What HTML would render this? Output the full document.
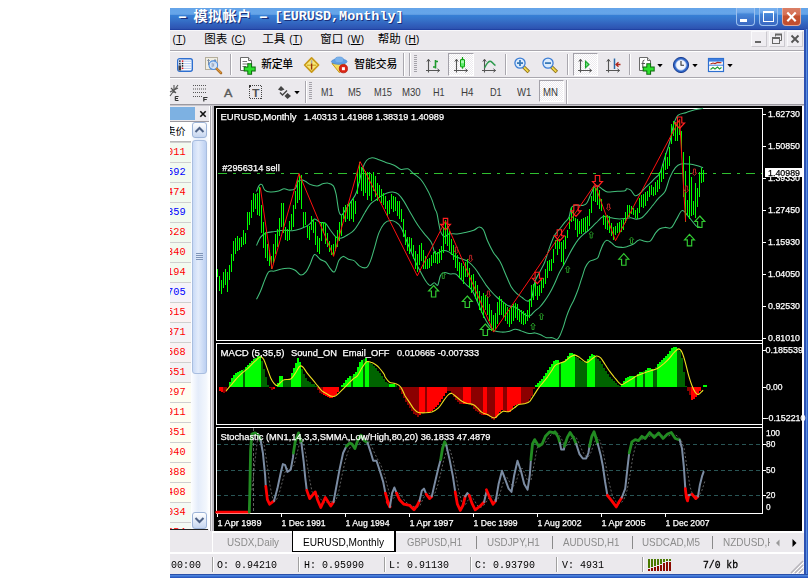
<!DOCTYPE html>
<html lang="zh"><head><meta charset="utf-8"><title>EURUSD,Monthly</title>
<style>
html,body{margin:0;padding:0;background:#fff;}
body{width:808px;height:578px;position:relative;overflow:hidden;font-family:"Liberation Sans","Noto Sans CJK SC",sans-serif;font-size:11px;color:#000;}
.a{position:absolute;white-space:nowrap;}
.win{left:170px;top:8px;width:638px;height:570px;background:#EBE9ED;}
.title{left:170px;top:8px;width:638px;height:22px;background:linear-gradient(to bottom,#64A3E8 0%,#66A6EA 24%,#5B99E0 31%,#367FD5 34%,#3672C9 55%,#3161BD 75%,#2E55B2 92%,#2A4EAE 95%,#18389A 100%);}
.ttext{color:#fff;font-weight:bold;font-family:"Liberation Mono","Noto Sans CJK SC",monospace;font-size:13px;line-height:22px;top:8px;text-shadow:1px 1px 0 #1a2f7a;}
.menu{font-family:"Liberation Sans","Noto Sans CJK SC",sans-serif;font-size:11.5px;line-height:20px;top:29px;color:#000;}
.mp{font-size:10px;margin-left:4px;letter-spacing:0.3px;}
.hl{height:1px;left:170px;width:634px;}
.tf{font-size:9.5px;color:#333;line-height:12px;top:87px;}
.mono{font-family:"Liberation Mono","Noto Sans CJK SC",monospace;}
.row{left:170px;width:21px;height:19px;overflow:hidden;font-family:"Liberation Mono",monospace;font-size:10.3px;line-height:18px;letter-spacing:0;}
.tab{top:534px;height:18px;line-height:18px;font-size:11px;color:#8A8A8A;}
.st{top:556px;height:18px;line-height:18px;font-size:10.5px;font-family:"Liberation Mono","Noto Sans CJK SC",monospace;color:#000;letter-spacing:0.55px;}
.vs{top:557px;height:15px;width:1px;background:#A0A0A0;border-right:1px solid #fff;}
</style></head><body>

<div class="a win"></div>
<div class="a title"></div>
<div class="a ttext" style="left:175.2px;top:6.5px;transform-origin:0 0;transform:scaleX(1.9)">-</div>
<div class="a ttext" style="left:193.5px;top:6px;font-size:14px;letter-spacing:0.5px">模拟帐户</div>
<div class="a ttext" style="left:255.8px;top:6.5px;transform-origin:0 0;transform:scaleX(1.9)">-</div>
<div class="a ttext" style="left:274.6px;top:6px;font-size:13.45px">[EURUSD,Monthly]</div>
<div class="a" style="left:736px;top:8px;width:19px;height:18px;box-sizing:border-box;border:1px solid #9CC0EE;border-top:none;border-radius:0 0 4px 4px;background:linear-gradient(to bottom,#78B0EE 0%,#6FA8EA 24%,#5F9BE2 31%,#4588DA 34%,#4179CE 60%,#3A68C2 100%)"></div><div class="a" style="left:740px;top:19px;width:7px;height:3px;background:#fff"></div>
<div class="a" style="left:759px;top:8px;width:19px;height:18px;box-sizing:border-box;border:1px solid #9CC0EE;border-top:none;border-radius:0 0 4px 4px;background:linear-gradient(to bottom,#78B0EE 0%,#6FA8EA 24%,#5F9BE2 31%,#4588DA 34%,#4179CE 60%,#3A68C2 100%)"></div><div class="a" style="left:763px;top:11px;width:11px;height:11px;border:1px solid #fff;border-top:2px solid #fff;box-sizing:border-box"></div>
<div class="a" style="left:782px;top:8px;width:19px;height:18px;box-sizing:border-box;border:1px solid #E2A898;border-top:none;border-radius:0 0 4px 4px;background:linear-gradient(to bottom,#DA7F66 0%,#D46E54 42%,#C4512F 46%,#C24E30 100%)"></div><svg class="a" style="left:782px;top:8px" width="19" height="18" viewBox="0 0 19 18"><path d="M5.3 4.5 L13.7 13.2 M13.7 4.5 L5.3 13.2" stroke="#fff" stroke-width="2.1" stroke-linecap="butt"/></svg>
<div class="a" style="left:804px;top:29px;width:4px;height:549px;background:linear-gradient(to right,#2C50B0 0,#2C50B0 50%,#5A90E0 50%,#5A90E0 75%,#3060C8 75%)"></div>
<div class="a" style="left:170px;top:574px;width:638px;height:4px;background:linear-gradient(to bottom,#2B50A8 0,#2B50A8 25%,#4C82DC 25%,#4C82DC 50%,#3A70D0 50%,#3A70D0 75%,#2A58C0 75%)"></div>
<div class="a menu" style="left:168.5px"><span class="mp">(<u>T</u>)</span></div>
<div class="a menu" style="left:204.2px">图表<span class="mp">(<u>C</u>)</span></div>
<div class="a menu" style="left:262.3px">工具<span class="mp">(<u>T</u>)</span></div>
<div class="a menu" style="left:320.3px">窗口<span class="mp">(<u>W</u>)</span></div>
<div class="a menu" style="left:377.8px">帮助<span class="mp">(<u>H</u>)</span></div>
<div class="a" style="left:170px;top:30px;width:634px;height:1px;background:#F8F7FA"></div>
<div class="a" style="left:751px;top:31px;width:16px;height:16px;box-sizing:border-box;background:#EFEDF1;border:1px solid;border-color:#FAFAFC #CBC9CF #CBC9CF #FAFAFC"></div>
<div class="a" style="left:769px;top:31px;width:16px;height:16px;box-sizing:border-box;background:#EFEDF1;border:1px solid;border-color:#FAFAFC #CBC9CF #CBC9CF #FAFAFC"></div>
<div class="a" style="left:787px;top:31px;width:16px;height:16px;box-sizing:border-box;background:#EFEDF1;border:1px solid;border-color:#FAFAFC #CBC9CF #CBC9CF #FAFAFC"></div>
<div class="a" style="left:755px;top:41px;width:6px;height:2px;background:#666"></div>
<svg class="a" style="left:771px;top:33px" width="12" height="12" viewBox="0 0 12 12"><path d="M4.5 3.5 V1.5 H10.5 V7.5 H8.5" fill="none" stroke="#666" stroke-width="1"/><path d="M4 1.5 H11" stroke="#666" stroke-width="2"/><rect x="1.5" y="4.5" width="7" height="6" fill="none" stroke="#666"/><path d="M1 5 H9" stroke="#666" stroke-width="2"/></svg>
<svg class="a" style="left:790px;top:34px" width="10" height="10" viewBox="0 0 10 10"><path d="M1.5 1.5 L8.5 8.5 M8.5 1.5 L1.5 8.5" stroke="#555" stroke-width="1.9"/></svg>
<div class="a hl" style="top:50px;background:#A9A7AE"></div>
<div class="a hl" style="top:51px;background:#fff"></div>
<div class="a hl" style="top:77px;background:#A9A7AE"></div>
<div class="a hl" style="top:78px;background:#fff"></div>
<div class="a hl" style="top:104px;background:#9B99A0"></div>
<div class="a hl" style="top:105px;background:#C8C6CC"></div>
<svg class="a" style="left:177px;top:58px;overflow:visible" width="16" height="14" viewBox="0 0 16 14"><rect x="0.7" y="0.7" width="14.6" height="12.6" rx="2" fill="#fff" stroke="#2E6FD0" stroke-width="1.4"/><rect x="1.5" y="1.5" width="2.6" height="11" fill="#C9D6EC"/><rect x="1.5" y="7.5" width="2.6" height="5" fill="#3A3A40"/><path d="M5 3.2 H14.5 M5 5.6 H14.5 M5 8 H14.5 M5 10.4 H14.5" stroke="#8FB2EA" stroke-width="0.7"/><rect x="2.2" y="2.4" width="1.3" height="1.4" fill="#111"/><rect x="2.2" y="5" width="1.3" height="1.4" fill="#111"/><rect x="4.8" y="2.4" width="1.5" height="1.5" fill="#E81818"/><rect x="4.8" y="4.8" width="1.4" height="1.4" fill="#111"/><rect x="4.8" y="7.2" width="1.4" height="1.4" fill="#111"/><rect x="4.8" y="9.6" width="1.5" height="1.5" fill="#E81818"/></svg>
<svg class="a" style="left:205px;top:57px;overflow:visible" width="18" height="18" viewBox="0 0 18 18"><rect x="0.5" y="0.5" width="12" height="12" fill="#F1EEE2" stroke="#B4AE9C"/><path d="M3.5 2 V8 M2.3 3.5 H4.8 M10 2 V7 M8.6 3.5 H11.2" stroke="#7C8CA4" stroke-width="1"/><circle cx="8.3" cy="8.2" r="4.3" fill="#D2E3F8" fill-opacity="0.85" stroke="#4E8FE0" stroke-width="1.1"/><path d="M7.2 5.8 V10.2 M8.6 6.5 V9.5" stroke="#9AA8C0" stroke-width="1.1"/><path d="M11.8 11.8 L16 16" stroke="#A86A20" stroke-width="2.6" stroke-linecap="round"/><path d="M11.8 11.6 L15.8 15.6" stroke="#E09A40" stroke-width="1.2" stroke-linecap="round"/></svg>
<div class="a" style="left:230px;top:54px;width:1px;height:21px;background:#A9A7AE"></div><div class="a" style="left:231px;top:54px;width:1px;height:21px;background:#fff"></div>
<svg class="a" style="left:240px;top:57px;overflow:visible" width="17" height="18" viewBox="0 0 17 18"><path d="M0.5 0.5 H8.5 L11.5 3.5 V13.5 H0.5 Z" fill="#fff" stroke="#6A6A6A"/><path d="M8.5 0.5 V3.5 H11.5" fill="#ddd" stroke="#6A6A6A"/><path d="M2.5 4.5 H7 M2.5 7 H9 M2.5 9.5 H6" stroke="#777"/><path d="M9.7 6.3 V17.7 M3.7 12 H15.7" stroke="#0A6A0A" stroke-width="4.8"/><path d="M9.7 7.3 V16.7 M4.7 12 H14.7" stroke="#2EE02E" stroke-width="2.8"/></svg>
<div class="a" style="left:261.3px;top:56.5px;font-size:10.8px;line-height:14px;font-weight:500;letter-spacing:-0.3px;color:#000">新定单</div>
<svg class="a" style="left:303px;top:56px;overflow:visible" width="17" height="18" viewBox="0 0 17 18"><path d="M8.6 1.8 L15.6 9 L8.6 16.2 L1.6 9 Z" fill="#F9E877" stroke="#C9991A" stroke-width="1.7" stroke-linejoin="round"/><path d="M4 9.2 H13.2" stroke="#C9A020" stroke-width="1.1"/><path d="M8.6 4.2 V7.5" stroke="#A8A8A8" stroke-width="1.5"/><path d="M8.6 7.5 V13.6" stroke="#9C3010" stroke-width="1.4"/></svg>
<svg class="a" style="left:330px;top:56px;overflow:visible" width="19" height="18" viewBox="0 0 19 18"><path d="M2 7.5 L9.5 16.8 L15 8 Z" fill="#F6DC5C" stroke="#C59A1E" stroke-width="1"/><ellipse cx="9.2" cy="5.6" rx="7.8" ry="2.7" fill="#5E9FE4" stroke="#4C8AD4" stroke-width="0.8"/><ellipse cx="9.2" cy="3.9" rx="4.4" ry="2.9" fill="#79B2EC" stroke="#5A96DC" stroke-width="0.7"/><circle cx="13.4" cy="12.7" r="4.1" fill="#DC2414" stroke="#B01C10" stroke-width="0.8"/><rect x="11.9" y="11.2" width="3" height="3" fill="#fff"/></svg>
<div class="a" style="left:354.2px;top:56.5px;font-size:10.8px;line-height:14px;font-weight:500;letter-spacing:0px;color:#000">智能交易</div>
<div class="a" style="left:403px;top:53px;width:1px;height:23px;background:#A9A7AE"></div><div class="a" style="left:404px;top:53px;width:1px;height:23px;background:#fff"></div>
<div class="a" style="left:409px;top:53px;width:1px;height:23px;background:#A9A7AE"></div><div class="a" style="left:410px;top:53px;width:1px;height:23px;background:#fff"></div>
<svg class="a" style="left:414px;top:55px;overflow:visible" width="4" height="19" viewBox="0 0 4 19"><rect x="0" y="0" width="3" height="1" fill="#A5A3AA"/><rect x="0" y="2" width="3" height="1" fill="#A5A3AA"/><rect x="0" y="4" width="3" height="1" fill="#A5A3AA"/><rect x="0" y="6" width="3" height="1" fill="#A5A3AA"/><rect x="0" y="8" width="3" height="1" fill="#A5A3AA"/><rect x="0" y="10" width="3" height="1" fill="#A5A3AA"/><rect x="0" y="12" width="3" height="1" fill="#A5A3AA"/><rect x="0" y="14" width="3" height="1" fill="#A5A3AA"/><rect x="0" y="16" width="3" height="1" fill="#A5A3AA"/></svg>
<svg class="a" style="left:425px;top:58px;overflow:visible" width="16" height="16" viewBox="0 0 16 16"><path d="M3.5 1.5 V14.5 M1 12.5 H14.5" stroke="#555" stroke-width="1.1" fill="none"/><path d="M1.8 3.6 L3.5 1.2 L5.2 3.6 M12.4 10.8 L14.6 12.5 L12.4 14.2" stroke="#555" stroke-width="1" fill="none"/><path d="M10.5 2 V10.5 M10.5 3.5 H13 M8 9 H10.5" stroke="#1E9A2E" stroke-width="1.6" fill="none"/></svg>
<div class="a" style="left:448px;top:53px;width:26px;height:23px;box-sizing:border-box;border:1px solid;border-color:#A3A1A9 #fff #fff #A3A1A9;background:repeating-conic-gradient(#fff 0 25%,#ECEAEE 0 50%) 0 0/2px 2px;"></div>
<svg class="a" style="left:453px;top:58px;overflow:visible" width="16" height="16" viewBox="0 0 16 16"><path d="M3.5 1.5 V14.5 M1 12.5 H14.5" stroke="#555" stroke-width="1.1" fill="none"/><path d="M1.8 3.6 L3.5 1.2 L5.2 3.6 M12.4 10.8 L14.6 12.5 L12.4 14.2" stroke="#555" stroke-width="1" fill="none"/><path d="M9.5 -1 V10.7" stroke="#12A012" stroke-width="1.2"/><rect x="7.5" y="1.5" width="4" height="7.4" rx="0.5" fill="#5AEE6A" stroke="#12A012"/><rect x="8" y="2.6" width="3" height="2.6" fill="#A8F8B0"/></svg>
<svg class="a" style="left:481px;top:58px;overflow:visible" width="16" height="16" viewBox="0 0 16 16"><path d="M3.5 1.5 V14.5 M1 12.5 H14.5" stroke="#555" stroke-width="1.1" fill="none"/><path d="M1.8 3.6 L3.5 1.2 L5.2 3.6 M12.4 10.8 L14.6 12.5 L12.4 14.2" stroke="#555" stroke-width="1" fill="none"/><path d="M3.5 10 C6 5 8 2.5 10 3.5 S13 7 14.5 7.5" stroke="#2E9A4E" stroke-width="1.5" fill="none"/></svg>
<div class="a" style="left:505px;top:54px;width:1px;height:21px;background:#A9A7AE"></div><div class="a" style="left:506px;top:54px;width:1px;height:21px;background:#fff"></div>
<svg class="a" style="left:514px;top:56px;overflow:visible" width="17" height="18" viewBox="0 0 17 18"><path d="M9.6 10.9 L14.8 16.1" stroke="#8A6A14" stroke-width="3.6" stroke-linecap="butt"/><path d="M9.8 11.1 L14.3 15.6" stroke="#F0D84A" stroke-width="2" stroke-linecap="butt"/><circle cx="6" cy="7.1" r="5.1" fill="#DCEBFB" stroke="#3A7CD4" stroke-width="1.25"/><path d="M3 7.1 H9" stroke="#3A7AB8" stroke-width="1.8"/><path d="M6 4.1 V10.1" stroke="#3A7AB8" stroke-width="1.8"/></svg>
<svg class="a" style="left:542px;top:56px;overflow:visible" width="17" height="18" viewBox="0 0 17 18"><path d="M9.6 10.9 L14.8 16.1" stroke="#8A6A14" stroke-width="3.6" stroke-linecap="butt"/><path d="M9.8 11.1 L14.3 15.6" stroke="#F0D84A" stroke-width="2" stroke-linecap="butt"/><circle cx="6" cy="7.1" r="5.1" fill="#DCEBFB" stroke="#3A7CD4" stroke-width="1.25"/><path d="M3 7.1 H9" stroke="#3A7AB8" stroke-width="1.8"/></svg>
<div class="a" style="left:567px;top:54px;width:1px;height:21px;background:#A9A7AE"></div><div class="a" style="left:568px;top:54px;width:1px;height:21px;background:#fff"></div>
<div class="a" style="left:573px;top:53px;width:25px;height:23px;box-sizing:border-box;border:1px solid;border-color:#A3A1A9 #fff #fff #A3A1A9;background:repeating-conic-gradient(#fff 0 25%,#ECEAEE 0 50%) 0 0/2px 2px;"></div>
<svg class="a" style="left:577px;top:58px;overflow:visible" width="16" height="16" viewBox="0 0 16 16"><path d="M3.5 1.5 V14.5 M1 12.5 H14.5" stroke="#555" stroke-width="1.1" fill="none"/><path d="M1.8 3.6 L3.5 1.2 L5.2 3.6 M12.4 10.8 L14.6 12.5 L12.4 14.2" stroke="#555" stroke-width="1" fill="none"/><path d="M8.5 3.2 L12 6.5 L8.5 9.8 Z" fill="#6CEC7C" stroke="#18A028" stroke-width="1.1"/></svg>
<svg class="a" style="left:605px;top:58px;overflow:visible" width="17" height="16" viewBox="0 0 17 16"><path d="M3.5 1.5 V14.5 M1 12.5 H14.5" stroke="#555" stroke-width="1.1" fill="none"/><path d="M1.8 3.6 L3.5 1.2 L5.2 3.6 M12.4 10.8 L14.6 12.5 L12.4 14.2" stroke="#555" stroke-width="1" fill="none"/><path d="M9.5 0.5 V11" stroke="#2A6AA8" stroke-width="1.5"/><path d="M15.5 6.5 H11.5 M13.5 4.2 L11 6.5 L13.5 8.8" stroke="#B0281C" stroke-width="1.3" fill="none"/></svg>
<div class="a" style="left:629px;top:54px;width:1px;height:21px;background:#A9A7AE"></div><div class="a" style="left:630px;top:54px;width:1px;height:21px;background:#fff"></div>
<svg class="a" style="left:639px;top:57px;overflow:visible" width="17" height="18" viewBox="0 0 17 18"><path d="M0.5 0.5 H8.5 L11.5 3.5 V13.5 H0.5 Z" fill="#fff" stroke="#6A6A6A"/><path d="M8.5 0.5 V3.5 H11.5" fill="#ddd" stroke="#6A6A6A"/><path d="M5.5 3 Q3.5 3 3.8 6 V11 M2.5 6.5 H6" stroke="#555" fill="none"/><path d="M9.7 6.3 V17.7 M3.7 12 H15.7" stroke="#0A6A0A" stroke-width="4.8"/><path d="M9.7 7.3 V16.7 M4.7 12 H14.7" stroke="#2EE02E" stroke-width="2.8"/></svg>
<svg class="a" style="left:657px;top:64px;overflow:visible" width="6" height="4" viewBox="0 0 6 4"><path d="M0.3 0 H5.7 L3 3.2 Z" fill="#000"/></svg>
<svg class="a" style="left:672px;top:56px;overflow:visible" width="18" height="18" viewBox="0 0 18 18"><circle cx="9" cy="9" r="7.6" fill="#2E66C8" stroke="#1C3E90" stroke-width="1"/><circle cx="9" cy="9" r="5.3" fill="#F2F6FC" stroke="#9DB8E8" stroke-width="0.8"/><path d="M9 5 V9.3 H12" stroke="#333" stroke-width="1.1" fill="none"/></svg>
<svg class="a" style="left:692px;top:64px;overflow:visible" width="6" height="4" viewBox="0 0 6 4"><path d="M0.3 0 H5.7 L3 3.2 Z" fill="#000"/></svg>
<svg class="a" style="left:708px;top:58px;overflow:visible" width="16" height="14" viewBox="0 0 16 14"><rect x="0.5" y="0.5" width="15" height="13" fill="#fff" stroke="#2E6FD0" stroke-width="1.2"/><rect x="1" y="1" width="14" height="2.6" fill="#3F7FE0"/><path d="M1 7.2 H15" stroke="#3F7FE0" stroke-width="1"/><path d="M2.5 6 L5 5 L7 5.6 L9.5 4.4 L13.5 4.8" stroke="#B0281C" stroke-width="1.1" fill="none"/><path d="M2.5 11.5 L5 9.5 L7 11 L9.5 9 L11.5 11 L13.5 9.5" stroke="#1E9A2E" stroke-width="1.1" fill="none"/></svg>
<svg class="a" style="left:727px;top:64px;overflow:visible" width="6" height="4" viewBox="0 0 6 4"><path d="M0.3 0 H5.7 L3 3.2 Z" fill="#000"/></svg>
<svg class="a" style="left:170px;top:84px;overflow:visible" width="11" height="18" viewBox="0 0 11 18"><path d="M0 12 L8 1 M0 8 L8 4 M1 4 L6 9 M4 1 V9" stroke="#555" stroke-width="1.1" fill="none"/><path d="M5.3 12.5 V16.5 M5.3 12.5 H8.5 M5.3 14.5 H8 M5.3 16.5 H8.5" stroke="#333" stroke-width="1.1" fill="none"/></svg>
<svg class="a" style="left:193px;top:84px;overflow:visible" width="16" height="18" viewBox="0 0 16 18"><path d="M0 1.5 H13 M0 5 H13 M0 8.5 H13 M0 12.5 H9" stroke="#555" stroke-width="1" stroke-dasharray="1 1"/><path d="M10.8 13 V17.5 M10.8 13.5 H14.5 M10.8 15.5 H13.8" stroke="#333" stroke-width="1.2" fill="none"/></svg>
<div class="a" style="left:223.6px;top:85.5px;font-family:'Liberation Sans',sans-serif;font-size:11.3px;line-height:14px;color:#5A5A5A;transform-origin:0 0;transform:scaleX(1.114);-webkit-text-stroke:0.35px #5A5A5A;">A</div>
<svg class="a" style="left:249px;top:85px;overflow:visible" width="14" height="15" viewBox="0 0 14 15"><rect x="0.5" y="0.5" width="12" height="13" fill="none" stroke="#444" stroke-dasharray="1 1" shape-rendering="crispEdges"/><rect x="0" y="0" width="2" height="2" fill="#333"/></svg>
<div class="a" style="left:252.0px;top:86.5px;font-family:'Liberation Sans',sans-serif;font-size:11.0px;line-height:12px;color:#555;font-weight:bold;transform-origin:0 0;transform:scaleX(1.116);">T</div>
<svg class="a" style="left:277px;top:86px;overflow:visible" width="15" height="13" viewBox="0 0 15 13"><path d="M4 0 L7.5 3.5 L4 5 L1 3.5 Z" fill="#444"/><path d="M3 6.5 L5.5 9 L10 4.5" stroke="#444" stroke-width="1.4" fill="none"/><path d="M10.5 7 L14 10 L10.5 13 L7.5 10 Z" fill="#444"/></svg>
<svg class="a" style="left:294px;top:91px;overflow:visible" width="6" height="4" viewBox="0 0 6 4"><path d="M0.3 0 H5.7 L3 3.2 Z" fill="#000"/></svg>
<div class="a" style="left:305px;top:81px;width:1px;height:22px;background:#A9A7AE"></div><div class="a" style="left:306px;top:81px;width:1px;height:22px;background:#fff"></div>
<svg class="a" style="left:309px;top:82px;overflow:visible" width="4" height="19" viewBox="0 0 4 19"><rect x="0" y="0" width="3" height="1" fill="#A5A3AA"/><rect x="0" y="2" width="3" height="1" fill="#A5A3AA"/><rect x="0" y="4" width="3" height="1" fill="#A5A3AA"/><rect x="0" y="6" width="3" height="1" fill="#A5A3AA"/><rect x="0" y="8" width="3" height="1" fill="#A5A3AA"/><rect x="0" y="10" width="3" height="1" fill="#A5A3AA"/><rect x="0" y="12" width="3" height="1" fill="#A5A3AA"/><rect x="0" y="14" width="3" height="1" fill="#A5A3AA"/><rect x="0" y="16" width="3" height="1" fill="#A5A3AA"/></svg>
<div class="a" style="left:320.5px;top:86.5px;font-family:'Liberation Sans',sans-serif;font-size:10.3px;line-height:12px;color:#3C3C3C;transform-origin:0 0;transform:scaleX(0.874);">M1</div>
<div class="a" style="left:348.0px;top:86.5px;font-family:'Liberation Sans',sans-serif;font-size:10.3px;line-height:12px;color:#3C3C3C;transform-origin:0 0;transform:scaleX(0.909);">M5</div>
<div class="a" style="left:374.3px;top:86.5px;font-family:'Liberation Sans',sans-serif;font-size:10.3px;line-height:12px;color:#3C3C3C;transform-origin:0 0;transform:scaleX(0.898);">M15</div>
<div class="a" style="left:402.0px;top:86.5px;font-family:'Liberation Sans',sans-serif;font-size:10.3px;line-height:12px;color:#3C3C3C;transform-origin:0 0;transform:scaleX(0.933);">M30</div>
<div class="a" style="left:433.4px;top:86.5px;font-family:'Liberation Sans',sans-serif;font-size:10.3px;line-height:12px;color:#3C3C3C;transform-origin:0 0;transform:scaleX(0.881);">H1</div>
<div class="a" style="left:460.5px;top:86.5px;font-family:'Liberation Sans',sans-serif;font-size:10.3px;line-height:12px;color:#3C3C3C;transform-origin:0 0;transform:scaleX(0.949);">H4</div>
<div class="a" style="left:489.6px;top:86.5px;font-family:'Liberation Sans',sans-serif;font-size:10.3px;line-height:12px;color:#3C3C3C;transform-origin:0 0;transform:scaleX(0.889);">D1</div>
<div class="a" style="left:517.0px;top:86.5px;font-family:'Liberation Sans',sans-serif;font-size:10.3px;line-height:12px;color:#3C3C3C;transform-origin:0 0;transform:scaleX(0.932);">W1</div>
<div class="a" style="left:539px;top:80px;width:25px;height:22px;box-sizing:border-box;border:1px solid;border-color:#A3A1A9 #fff #fff #A3A1A9;background:repeating-conic-gradient(#fff 0 25%,#ECEAEE 0 50%) 0 0/2px 2px;"></div>
<div class="a" style="left:543.4px;top:86.5px;font-family:'Liberation Sans',sans-serif;font-size:10.3px;line-height:12px;color:#3C3C3C;transform-origin:0 0;transform:scaleX(0.936);">MN</div>
<div class="a" style="left:566px;top:80px;width:1px;height:24px;background:#A9A7AE"></div><div class="a" style="left:567px;top:80px;width:1px;height:24px;background:#fff"></div>
<div class="a" style="left:170px;top:107px;width:25px;height:13px;background:#7DB1E2"></div>
<svg class="a" style="left:198px;top:109px" width="10" height="10" viewBox="0 0 10 10"><path d="M2.3 2.3 L7.7 7.7 M7.7 2.3 L2.3 7.7" stroke="#111" stroke-width="1.6"/></svg>
<div class="a" style="left:170px;top:121px;width:40px;height:1px;background:#9B99A0"></div>
<div class="a" style="left:170px;top:122px;width:21px;height:19px;background:#fff;overflow:hidden;border-bottom:1px solid #B8B8B8"><span class="a" style="left:-4.5px;top:0;font-size:10px;line-height:19px;font-family:'Liberation Sans','Noto Sans CJK SC',sans-serif">卖价</span></div>
<div class="a" style="left:170px;top:142px;width:21px;height:387px;background:#CFCFCF"></div>
<div class="a row" style="top:143px;height:19px;color:#FF0000;background:#F2FAF0"><span style="margin-left:-2.9px">011</span></div>
<div class="a row" style="top:163px;height:19px;color:#0000FF;background:#F2FAF0"><span style="margin-left:-2.9px">592</span></div>
<div class="a row" style="top:183px;height:19px;color:#FF0000;background:#F2FAF0"><span style="margin-left:-2.9px">474</span></div>
<div class="a row" style="top:203px;height:19px;color:#0000FF;background:#F2FAF0"><span style="margin-left:-2.9px">359</span></div>
<div class="a row" style="top:223px;height:19px;color:#FF0000;background:#F2FAF0"><span style="margin-left:-2.9px">528</span></div>
<div class="a row" style="top:243px;height:19px;color:#FF0000;background:#F2FAF0"><span style="margin-left:-2.9px">340</span></div>
<div class="a row" style="top:263px;height:19px;color:#FF0000;background:#F2FAF0"><span style="margin-left:-2.9px">194</span></div>
<div class="a row" style="top:283px;height:19px;color:#0000FF;background:#F4F3FA"><span style="margin-left:-2.9px">705</span></div>
<div class="a row" style="top:303px;height:19px;color:#FF0000;background:#FBF3F3"><span style="margin-left:-2.9px">515</span></div>
<div class="a row" style="top:323px;height:19px;color:#FF0000;background:#F4F4F7"><span style="margin-left:-2.9px">371</span></div>
<div class="a row" style="top:343px;height:19px;color:#FF0000;background:#F8F3F4"><span style="margin-left:-2.9px">568</span></div>
<div class="a row" style="top:363px;height:19px;color:#FF0000;background:#F3F3F5"><span style="margin-left:-2.9px">551</span></div>
<div class="a row" style="top:383px;height:19px;color:#FF0000;background:#FEFEF2"><span style="margin-left:-2.9px">297</span></div>
<div class="a row" style="top:403px;height:19px;color:#FF0000;background:#FEFEF2"><span style="margin-left:-2.9px">911</span></div>
<div class="a row" style="top:423px;height:19px;color:#FF0000;background:#FEFEF2"><span style="margin-left:-2.9px">851</span></div>
<div class="a row" style="top:443px;height:19px;color:#FF0000;background:#FEFEF2"><span style="margin-left:-2.9px">040</span></div>
<div class="a row" style="top:463px;height:19px;color:#FF0000;background:#FEFEF2"><span style="margin-left:-2.9px">388</span></div>
<div class="a row" style="top:483px;height:19px;color:#FF0000;background:#FEFEF2"><span style="margin-left:-2.9px">408</span></div>
<div class="a row" style="top:503px;height:19px;color:#FF0000;background:#F4FAF4"><span style="margin-left:-2.9px">034</span></div>
<div class="a row" style="top:523px;height:6px;color:#FF0000;background:#F4FAF4"><span style="margin-left:-2.9px">454</span></div>
<div class="a" style="left:170px;top:529px;width:38px;height:1px;background:#222"></div>
<div class="a" style="left:191px;top:122px;width:18px;height:407px;background:linear-gradient(to right,#FDFEFF,#E4ECFA 40%,#F3F7FD 85%,#fff)"></div>
<div class="a" style="left:192px;top:122px;width:15px;height:16px;border:1px solid #9DB4D8;border-radius:3px;box-sizing:border-box;background:linear-gradient(to bottom,#fff,#C6D6F0)"></div>
<svg class="a" style="left:192px;top:122px" width="15" height="16" viewBox="0 0 15 16"><path d="M3.5 10 L7.5 6 L11.5 10" fill="none" stroke="#4D6185" stroke-width="2"/></svg>
<div class="a" style="left:192px;top:512px;width:15px;height:17px;border:1px solid #9DB4D8;border-radius:3px;box-sizing:border-box;background:linear-gradient(to bottom,#fff,#C6D6F0)"></div>
<svg class="a" style="left:192px;top:512px" width="15" height="16" viewBox="0 0 15 16"><path d="M3.5 6 L7.5 10 L11.5 6" fill="none" stroke="#4D6185" stroke-width="2"/></svg>
<div class="a" style="left:192px;top:140px;width:15px;height:234px;border:1px solid #A9BEE0;border-radius:3px;box-sizing:border-box;background:linear-gradient(to right,#C9DAF6,#E3ECFB 40%,#BCD0F2)"></div>
<div class="a" style="left:196px;top:253px;width:7px;height:1px;background:#7F95B8;box-shadow:0 2px 0 #7F95B8,0 4px 0 #7F95B8,0 6px 0 #7F95B8"></div>
<div class="a" style="left:209px;top:106px;width:1px;height:425px;background:#fff"></div>
<div class="a" style="left:210px;top:106px;width:1px;height:425px;background:#A9A7AE"></div>
<svg class="a" style="left:0;top:0;will-change:transform" width="808" height="578" viewBox="0 0 808 578" font-family="'Liberation Sans',sans-serif" shape-rendering="auto">
<rect x="214" y="106" width="588" height="425" fill="#000"/>
<rect x="212" y="106" width="2" height="425" fill="#B9B7BE"/>
<rect x="802" y="106" width="2" height="427" fill="#fff"/>
<path d="M216.5 108.5 H762.5 V340.5 H216.5 Z" fill="none" stroke="#fff" stroke-width="1" shape-rendering="crispEdges"/>
<path d="M216.5 343.5 H762.5 V424.5 H216.5 Z" fill="none" stroke="#fff" stroke-width="1" shape-rendering="crispEdges"/>
<path d="M216.5 427.5 H762.5 V513.5 H216.5 Z" fill="none" stroke="#fff" stroke-width="1" shape-rendering="crispEdges"/>
<path d="M762.5 108 V514" stroke="#fff" shape-rendering="crispEdges"/>
<path d="M218 173.5 H762" stroke="#2FBF2F" stroke-width="1" stroke-dasharray="9 6 3 6" shape-rendering="crispEdges"/>
<path d="M256.5 191.5 C256.9 190.5 258.3 186.5 259.2 185.4 C260.2 184.2 261.1 183.8 262.0 184.6 C262.9 185.3 263.4 188.8 264.8 190.1 C266.1 191.3 268.0 191.9 270.3 192.0 C272.6 192.2 276.3 191.5 278.6 190.9 C280.9 190.4 282.3 188.8 284.1 188.7 C286.0 188.6 287.8 190.1 289.6 190.1 C291.5 190.1 293.8 190.1 295.2 188.7 C296.6 187.3 297.0 183.3 297.9 181.8 C298.9 180.3 299.6 180.0 300.7 179.9 C301.9 179.7 303.2 180.2 304.9 181.0 C306.5 181.7 308.3 183.7 310.4 184.6 C312.5 185.4 315.2 186.1 317.3 185.9 C319.4 185.8 321.0 184.2 322.8 183.7 C324.7 183.3 326.6 182.8 328.4 183.2 C330.1 183.5 332.0 184.1 333.3 185.9 C334.6 187.8 335.1 190.1 336.1 194.2 C337.0 198.4 337.9 207.4 338.8 210.8 C339.7 214.3 340.4 215.2 341.6 215.0 C342.7 214.7 344.1 211.7 345.7 209.4 C347.3 207.1 349.4 204.1 351.3 201.1 C353.1 198.2 355.0 196.8 356.8 191.5 C358.6 186.2 360.7 174.5 362.3 169.4 C363.9 164.2 364.9 162.4 366.5 160.5 C368.1 158.6 369.9 157.9 372.0 157.7 C374.1 157.6 376.6 158.9 378.9 159.7 C381.2 160.5 383.3 161.5 385.8 162.4 C388.4 163.4 391.6 164.1 394.1 165.2 C396.7 166.4 398.7 168.8 401.0 169.4 C403.3 170.0 405.9 168.1 407.9 168.8 C410.0 169.5 411.4 171.8 413.5 173.5 C415.5 175.2 418.3 176.7 420.4 179.0 C422.5 181.3 424.1 184.1 425.9 187.3 C427.8 190.5 429.9 194.8 431.4 198.4 C433.0 202.0 434.1 206.5 435.0 209.0 C435.9 211.6 436.0 209.9 437.0 213.6 C437.9 217.3 439.2 227.3 440.5 231.1 C441.8 235.0 443.3 236.2 444.7 236.7 C446.1 237.1 446.8 234.4 448.8 233.9 C450.9 233.5 454.4 234.1 457.1 233.9 C459.9 233.7 462.6 233.1 465.4 232.5 C468.2 231.9 471.4 231.2 473.7 230.3 C476.0 229.4 477.6 227.1 479.2 227.0 C480.8 226.9 482.0 227.5 483.4 229.8 C484.8 232.1 485.9 237.1 487.5 240.8 C489.1 244.5 491.0 248.4 493.1 251.9 C495.1 255.3 497.9 257.9 500.0 261.6 C502.0 265.2 503.7 269.9 505.5 274.0 C507.3 278.1 509.2 283.2 511.0 286.4 C512.9 289.7 514.7 291.5 516.6 293.4 C518.4 295.2 520.2 296.2 522.1 297.5 C523.9 298.8 526.0 301.1 527.6 301.1 C529.2 301.1 530.5 300.8 531.8 297.5 C533.0 294.2 533.7 285.8 535.0 281.5 C536.3 277.2 538.2 275.1 539.8 271.9 C541.4 268.7 543.1 266.2 544.7 262.2 C546.3 258.1 547.9 252.0 549.5 247.6 C551.1 243.2 552.8 238.5 554.4 235.5 C556.0 232.5 557.6 231.5 559.2 229.5 C560.8 227.5 562.4 225.4 564.0 223.4 C565.6 221.4 567.7 220.0 568.9 217.4 C570.1 214.8 570.3 209.7 571.3 207.7 C572.3 205.7 573.8 205.7 575.0 205.3 C576.2 204.9 577.2 205.3 578.6 205.3 C580.0 205.3 582.0 205.7 583.4 205.3 C584.8 204.9 585.8 204.6 587.0 202.8 C588.2 201.0 589.5 197.0 590.7 194.4 C591.9 191.8 593.1 188.5 594.3 187.1 C595.5 185.7 596.6 185.5 598.0 185.9 C599.4 186.3 601.2 188.5 602.8 189.5 C604.4 190.5 605.6 191.7 607.6 192.0 C609.6 192.3 612.1 191.7 615.0 191.5 C617.9 191.3 623.1 191.2 625.0 190.7 C626.9 190.2 625.6 188.8 626.6 188.7 C627.5 188.6 629.3 188.9 630.7 190.1 C632.1 191.2 633.5 194.9 634.9 195.6 C636.2 196.3 637.4 195.4 639.0 194.2 C640.6 193.1 642.7 190.5 644.5 188.7 C646.4 186.9 648.2 185.0 650.1 183.2 C651.9 181.3 654.0 179.3 655.6 177.6 C657.2 176.0 658.6 175.6 659.7 173.5 C660.9 171.4 661.6 168.0 662.5 165.2 C663.4 162.4 663.8 160.9 665.0 156.9 C666.2 153.0 668.4 147.0 669.9 141.5 C671.4 135.9 672.6 127.9 674.0 123.5 C675.4 119.1 676.1 117.0 678.2 115.2 C680.3 113.4 683.7 113.4 686.5 112.4 C689.2 111.5 692.0 110.4 694.8 109.7 C697.5 109.0 701.7 108.5 703.1 108.3" fill="none" stroke="#42BE7A" stroke-width="1.05"/>
<path d="M256.5 245.4 C257.2 244.0 259.0 239.2 260.6 237.1 C262.2 235.0 263.8 233.9 266.1 232.9 C268.5 232.0 271.4 232.0 274.4 231.6 C277.4 231.1 281.1 230.3 284.1 230.2 C287.1 230.0 289.6 231.0 292.4 230.7 C295.2 230.5 297.9 229.8 300.7 228.8 C303.5 227.8 306.7 226.3 309.0 224.6 C311.3 223.0 312.7 219.5 314.5 219.1 C316.4 218.7 318.2 221.7 320.1 222.4 C321.9 223.1 323.8 222.0 325.6 223.3 C327.3 224.6 328.8 227.9 330.5 230.2 C332.3 232.5 334.2 235.8 336.1 237.1 C337.9 238.4 339.5 238.4 341.6 237.9 C343.7 237.5 346.4 235.6 348.5 234.3 C350.6 233.0 352.2 232.3 354.0 230.2 C355.9 228.1 357.7 224.9 359.6 221.9 C361.4 218.9 363.2 215.2 365.1 212.2 C366.9 209.2 368.8 206.0 370.6 203.9 C372.5 201.8 374.3 201.1 376.1 199.8 C378.0 198.4 379.8 196.8 381.7 195.6 C383.5 194.5 385.4 193.5 387.2 192.9 C389.0 192.3 390.9 191.8 392.7 192.0 C394.6 192.3 396.4 192.7 398.3 194.2 C400.1 195.8 402.0 198.4 403.8 201.1 C405.6 203.9 407.5 207.6 409.3 210.8 C411.2 214.0 413.0 217.5 414.9 220.5 C416.7 223.5 418.5 226.3 420.4 228.8 C422.2 231.3 424.1 233.4 425.9 235.7 C427.8 238.0 429.9 239.7 431.4 242.6 C433.0 245.5 433.7 251.6 435.0 253.3 C436.3 254.9 437.8 252.9 439.1 252.4 C440.5 252.0 441.7 250.6 443.3 250.5 C444.9 250.4 447.0 251.0 448.8 251.9 C450.7 252.8 452.3 254.9 454.4 256.0 C456.4 257.2 459.0 257.9 461.3 258.8 C463.6 259.7 465.9 259.9 468.2 261.6 C470.5 263.2 473.0 265.9 475.1 268.5 C477.2 271.0 478.8 274.0 480.6 276.8 C482.5 279.5 484.3 282.5 486.1 285.1 C488.0 287.6 489.8 289.9 491.7 292.0 C493.5 294.0 495.4 295.9 497.2 297.5 C499.0 299.1 500.9 300.3 502.7 301.6 C504.6 303.0 506.2 304.9 508.3 305.8 C510.3 306.7 513.1 306.3 515.2 307.2 C517.3 308.1 518.9 309.9 520.7 311.3 C522.5 312.7 524.6 314.8 526.2 315.5 C527.8 316.2 529.0 316.2 530.4 315.5 C531.8 314.8 533.0 312.7 534.5 311.3 C536.1 309.9 538.1 308.7 539.8 307.0 C541.5 305.3 543.1 303.1 544.7 300.9 C546.3 298.7 547.9 296.4 549.5 293.6 C551.1 290.8 552.8 287.4 554.4 284.0 C556.0 280.6 557.6 276.2 559.2 273.0 C560.8 269.8 562.4 267.6 564.0 264.6 C565.6 261.6 567.3 257.9 568.9 254.9 C570.5 251.9 572.1 249.0 573.7 246.4 C575.3 243.8 577.0 241.2 578.6 239.2 C580.2 237.2 581.8 235.7 583.4 234.3 C585.0 232.9 586.7 232.1 588.3 230.7 C589.9 229.3 591.5 227.4 593.1 225.8 C594.7 224.2 596.6 222.4 598.0 221.0 C599.4 219.6 600.4 218.2 601.6 217.4 C602.8 216.6 603.8 216.2 605.2 216.2 C606.6 216.2 608.4 217.0 610.0 217.4 C611.6 217.8 613.4 218.3 615.0 218.6 C616.6 218.9 618.0 219.0 619.7 219.0 C621.4 219.0 623.2 218.8 625.0 218.6 C626.8 218.4 628.8 217.6 630.7 217.7 C632.6 217.8 634.4 219.1 636.2 219.1 C638.1 219.1 639.9 218.9 641.8 217.7 C643.6 216.6 645.5 214.3 647.3 212.2 C649.1 210.1 651.0 207.6 652.8 205.3 C654.7 203.0 656.3 200.7 658.4 198.4 C660.4 196.1 663.1 195.0 665.0 191.5 C666.9 188.0 668.1 181.4 669.9 177.4 C671.6 173.5 673.6 169.9 675.4 167.7 C677.3 165.5 678.6 164.7 680.9 164.1 C683.2 163.5 686.5 163.9 689.2 164.1 C692.0 164.4 695.2 165.2 697.5 165.8 C699.8 166.4 702.1 167.4 703.1 167.7" fill="none" stroke="#42BE7A" stroke-width="1.05"/>
<path d="M256.5 299.3 C257.2 297.9 259.2 294.2 260.6 291.0 C262.0 287.8 263.4 283.2 264.8 279.9 C266.1 276.7 267.3 273.1 268.9 271.6 C270.5 270.2 272.4 271.6 274.4 271.1 C276.5 270.6 278.8 269.3 281.4 268.9 C283.9 268.4 287.3 268.1 289.6 268.3 C292.0 268.6 293.3 269.2 295.2 270.3 C297.0 271.4 298.9 274.7 300.7 275.0 C302.5 275.2 304.6 273.6 306.2 271.6 C307.8 269.7 309.0 266.2 310.4 263.4 C311.8 260.5 312.9 255.2 314.5 254.5 C316.1 253.8 318.2 258.0 320.1 259.2 C321.9 260.5 323.8 260.4 325.6 262.0 C327.3 263.6 329.0 267.3 330.5 268.9 C332.0 270.5 333.3 273.0 334.7 271.6 C336.1 270.3 337.4 263.1 338.8 260.6 C340.2 258.1 341.4 256.7 343.0 256.4 C344.6 256.2 346.7 258.5 348.5 259.2 C350.3 259.9 352.2 259.4 354.0 260.6 C355.9 261.7 357.5 265.0 359.6 266.1 C361.6 267.3 364.6 268.4 366.5 267.5 C368.3 266.6 369.2 264.0 370.6 260.6 C372.0 257.1 373.4 251.4 374.8 246.8 C376.1 242.2 377.3 236.9 378.9 232.9 C380.5 229.0 382.6 225.3 384.4 223.3 C386.3 221.2 388.1 220.7 390.0 220.5 C391.8 220.3 393.7 220.7 395.5 221.9 C397.3 223.0 399.0 223.7 401.0 227.4 C403.1 231.1 405.6 238.5 407.9 244.0 C410.2 249.5 412.8 256.0 414.9 260.6 C416.9 265.2 418.5 268.2 420.4 271.6 C422.2 275.1 424.3 279.0 425.9 281.3 C427.5 283.6 428.7 285.2 430.1 285.5 C431.4 285.7 432.9 282.8 434.2 282.7 C435.5 282.6 436.7 286.3 437.8 285.1 C438.8 283.8 439.4 277.5 440.5 275.4 C441.7 273.3 443.1 272.8 444.7 272.6 C446.3 272.4 448.4 273.8 450.2 274.0 C452.0 274.2 453.9 273.1 455.7 274.0 C457.6 274.9 459.4 277.7 461.3 279.5 C463.1 281.4 465.0 283.2 466.8 285.1 C468.6 286.9 470.5 287.6 472.3 290.6 C474.2 293.6 476.0 298.9 477.9 303.0 C479.7 307.2 481.5 311.8 483.4 315.5 C485.2 319.2 487.1 322.6 488.9 325.1 C490.8 327.7 492.4 329.5 494.4 330.7 C496.5 331.8 499.0 331.9 501.4 332.1 C503.7 332.2 506.0 332.0 508.3 331.5 C510.6 331.0 513.1 329.4 515.2 329.3 C517.3 329.2 518.4 330.0 520.7 330.7 C523.0 331.4 526.6 333.1 529.0 333.4 C531.4 333.8 533.1 332.7 535.0 332.9 C536.9 333.1 538.8 334.0 540.7 334.8 C542.6 335.6 544.5 337.2 546.4 337.7 C548.3 338.2 550.4 337.4 552.1 337.7 C553.9 338.0 555.6 339.7 556.9 339.4 C558.2 339.1 558.6 338.2 559.7 336.0 C560.8 333.8 562.4 329.5 563.5 326.3 C564.6 323.1 565.3 320.0 566.4 316.8 C567.5 313.6 568.9 310.2 570.2 307.3 C571.5 304.4 572.7 302.6 574.0 299.7 C575.3 296.8 576.5 293.7 577.8 290.2 C579.1 286.7 580.3 282.5 581.6 278.7 C582.9 274.9 584.1 270.1 585.4 267.3 C586.7 264.5 587.8 262.9 589.2 261.6 C590.6 260.3 592.6 260.3 594.0 259.7 C595.4 259.1 596.7 259.4 597.8 257.8 C598.9 256.2 599.6 252.6 600.6 250.2 C601.6 247.8 602.5 245.2 603.5 243.6 C604.5 241.9 605.6 240.5 606.9 240.3 C608.2 240.1 609.6 241.6 611.1 242.6 C612.6 243.6 613.9 245.6 615.8 246.4 C617.7 247.2 620.7 247.3 622.5 247.4 C624.3 247.5 624.7 247.3 626.6 246.8 C628.4 246.2 631.4 245.2 633.5 244.0 C635.5 242.8 637.2 240.3 639.0 239.9 C640.8 239.4 642.7 241.0 644.5 241.2 C646.4 241.5 648.2 242.6 650.1 241.2 C651.9 239.9 654.0 235.0 655.6 232.9 C657.2 230.9 658.2 229.7 659.7 228.8 C661.3 227.9 663.1 227.6 665.0 227.4 C666.9 227.2 669.3 229.2 671.3 227.7 C673.2 226.3 675.0 221.7 676.8 218.9 C678.6 216.0 680.3 210.8 682.3 210.6 C684.4 210.4 686.9 215.0 689.2 217.5 C691.5 220.0 694.3 224.2 696.1 225.8 C698.0 227.4 699.6 226.9 700.3 227.2" fill="none" stroke="#42BE7A" stroke-width="1.05"/>
<path d="M217.5 269V277M219.5 276V291M221.5 280V294M223.5 272V288M225.5 269V285M227.5 272V292M229.5 265V280M231.5 254V272M233.5 241V261M235.5 238V254M237.5 236V251M239.5 238V250M241.5 237V247M243.5 230V245M245.5 233V244M247.5 212V230M249.5 212V225M251.5 200V218M253.5 193V212M255.5 194V209M257.5 193V215M259.5 187V216M261.5 205V233M263.5 222V248M265.5 232V258M267.5 244V261M269.5 250V266M271.5 256V269M273.5 244V263M275.5 234V254M277.5 229V247M279.5 218V236M281.5 203V227M283.5 203V233M285.5 227V240M287.5 229V241M289.5 221V240M291.5 214V230M293.5 205V227M295.5 191V209M297.5 179V203M299.5 174V200M301.5 175V209M303.5 212V227M305.5 212V225M307.5 225V238M309.5 226V240M311.5 216V230M313.5 219V233M315.5 222V245M317.5 236V252M319.5 238V254M321.5 222V241M323.5 222V233M325.5 223V244M327.5 233V247M329.5 241V252M331.5 245V255M333.5 244V256M335.5 236V251M337.5 230V247M339.5 222V241M341.5 215V236M343.5 207V219M345.5 205V222M347.5 204V219M349.5 203V221M351.5 201V219M353.5 198V222M355.5 201V214M357.5 171V194M359.5 162V183M361.5 167V191M363.5 168V196M365.5 171V193M367.5 172V200M369.5 172V196M371.5 174V201M373.5 172V191M375.5 176V197M377.5 183V201M379.5 185V198M381.5 189V203M383.5 193V205M385.5 196V209M387.5 201V216M389.5 200V214M391.5 194V209M393.5 196V212M395.5 197V211M397.5 201V216M399.5 201V219M401.5 209V222M403.5 219V237M405.5 230V245M407.5 237V251M409.5 237V254M411.5 238V252M413.5 245V259M415.5 251V269M417.5 254V272M419.5 245V265M421.5 243V261M423.5 250V269M425.5 256V269M427.5 259V269M429.5 258V268M431.5 255V266M433.5 252V263M435.5 251V263M437.5 252V264M439.5 249V263M441.5 246V260M443.5 227V253M445.5 220V244M447.5 226V246M449.5 231V251M451.5 239V255M453.5 245V260M455.5 249V268M457.5 255V271M459.5 262V278M461.5 263V280M463.5 266V284M465.5 262V277M467.5 259V277M469.5 268V288M471.5 275V293M473.5 274V291M475.5 281V299M477.5 285V302M479.5 291V310M481.5 296V313M483.5 293V318M485.5 295V310M487.5 296V315M489.5 304V321M491.5 310V331M493.5 315V332M495.5 313V329M497.5 302V324M499.5 296V315M501.5 299V315M503.5 302V318M505.5 304V321M507.5 307V324M509.5 310V327M511.5 307V324M513.5 304V321M515.5 303V318M517.5 304V320M519.5 309V322M521.5 310V324M523.5 311V325M525.5 313V324M527.5 310V321M529.5 299V318M531.5 285V307M533.5 284V300M535.5 282V296M537.5 286V300M539.5 285V296M541.5 280V293M543.5 278V288M545.5 269V284M547.5 261V278M549.5 260V271M551.5 259V271M553.5 249V263M555.5 240V249M557.5 238V255M559.5 239V249M561.5 242V262M563.5 240V265M565.5 236V249M567.5 230V238M569.5 217V229M571.5 207V222M573.5 211V221M575.5 218V230M577.5 219V237M579.5 221V234M581.5 219V234M583.5 218V232M585.5 217V232M587.5 216V231M589.5 209V226M591.5 196V213M593.5 187V201M595.5 188V202M597.5 186V205M599.5 190V209M601.5 199V211M603.5 215V225M605.5 216V229M607.5 215V230M609.5 216V233M611.5 223V236M613.5 227V240M615.5 226V235M617.5 223V233M619.5 222V233M621.5 220V232M623.5 218V230M625.5 212V223M627.5 205V218M629.5 205V217M631.5 206V214M633.5 208V215M635.5 210V218M637.5 208V219M639.5 198V213M641.5 195V207M643.5 194V208M645.5 192V206M647.5 191V201M649.5 186V197M651.5 185V195M653.5 187V196M655.5 182V195M657.5 180V192M659.5 172V189M661.5 168V182M663.5 163V179M665.5 153V170M667.5 157V169M669.5 147V166M671.5 124V144M673.5 121V136M675.5 122V141M677.5 118V141M679.5 120V135M681.5 131V151M683.5 152V197M685.5 171V222M687.5 200V216M689.5 156V219M691.5 177V216M693.5 201V215M695.5 183V218M697.5 188V207M699.5 172V197M701.5 168V183M703.5 170V182" stroke="#00FF00" stroke-width="1" fill="none" shape-rendering="crispEdges"/>
<path d="M260.3 187.3 L272.0 268.9 L299.0 173.5 L333.6 256.4 L360.1 161.6 L417.3 275.8 L445.5 220.9 L493.6 332.1 L594.8 184.6 L615.5 240.7 L679.6 119.4 L685.6 221.6" fill="none" stroke="#FF1010" stroke-width="1"/>
<path d="M433.6 285.5 l5 5.5 h-2.8 v6 h-4.4 v-6 h-2.8 z" fill="none" stroke="#32CD32" stroke-width="1.15"/>
<path d="M467.3 296.0 l5 5.5 h-2.8 v6 h-4.4 v-6 h-2.8 z" fill="none" stroke="#32CD32" stroke-width="1.15"/>
<path d="M485.3 324.0 l5 5.5 h-2.8 v6 h-4.4 v-6 h-2.8 z" fill="none" stroke="#32CD32" stroke-width="1.15"/>
<path d="M623.8 253.7 l5 5.5 h-2.8 v6 h-4.4 v-6 h-2.8 z" fill="none" stroke="#32CD32" stroke-width="1.15"/>
<path d="M699.8 216.0 l5 5.5 h-2.8 v6 h-4.4 v-6 h-2.8 z" fill="none" stroke="#32CD32" stroke-width="1.15"/>
<path d="M689.5 234.3 l5 5.5 h-2.8 v6 h-4.4 v-6 h-2.8 z" fill="none" stroke="#32CD32" stroke-width="1.15"/>
<path d="M537.3 283.7 l5 -5.5 h-2.8 v-6 h-4.4 v6 h-2.8 z" fill="none" stroke="#FF2020" stroke-width="1.15"/>
<path d="M597.5 187.0 l5 -5.5 h-2.8 v-6 h-4.4 v6 h-2.8 z" fill="none" stroke="#FF2020" stroke-width="1.15"/>
<path d="M576.0 216.3 l5 -5.5 h-2.8 v-6 h-4.4 v6 h-2.8 z" fill="none" stroke="#FF2020" stroke-width="1.15"/>
<path d="M559.4 241.2 l5 -5.5 h-2.8 v-6 h-4.4 v6 h-2.8 z" fill="none" stroke="#FF2020" stroke-width="1.15"/>
<path d="M445.5 229.8 l5 -5.5 h-2.8 v-6 h-4.4 v6 h-2.8 z" fill="none" stroke="#FF2020" stroke-width="1.15"/>
<path d="M679.6 128.5 l5 -5.5 h-2.8 v-6 h-4.4 v6 h-2.8 z" fill="none" stroke="#FF2020" stroke-width="1.15"/>
<path d="M456.4 253.5 l2.2 -2.5 h-1.2 v-4 h-2 v4 h-1.2 z" fill="none" stroke="#B22222" stroke-width="1"/>
<path d="M470.6 261.8 l2.2 -2.5 h-1.2 v-4 h-2 v4 h-1.2 z" fill="none" stroke="#B22222" stroke-width="1"/>
<path d="M488.4 297.5 l2.2 -2.5 h-1.2 v-4 h-2 v4 h-1.2 z" fill="none" stroke="#B22222" stroke-width="1"/>
<path d="M608.6 210.5 l2.2 -2.5 h-1.2 v-4 h-2 v4 h-1.2 z" fill="none" stroke="#B22222" stroke-width="1"/>
<path d="M694.5 175.5 l2.2 -2.5 h-1.2 v-4 h-2 v4 h-1.2 z" fill="none" stroke="#B22222" stroke-width="1"/>
<path d="M686.4 192.5 l2.2 -2.5 h-1.2 v-4 h-2 v4 h-1.2 z" fill="none" stroke="#B22222" stroke-width="1"/>
<path d="M443.3 272.0 l2.2 2.5 h-1.2 v4 h-2 v-4 h-1.2 z" fill="none" stroke="#228B22" stroke-width="1"/>
<path d="M541.4 313.0 l2.2 2.5 h-1.2 v4 h-2 v-4 h-1.2 z" fill="none" stroke="#228B22" stroke-width="1"/>
<path d="M533.0 323.0 l2.2 2.5 h-1.2 v4 h-2 v-4 h-1.2 z" fill="none" stroke="#228B22" stroke-width="1"/>
<path d="M591.2 231.5 l2.2 2.5 h-1.2 v4 h-2 v-4 h-1.2 z" fill="none" stroke="#228B22" stroke-width="1"/>
<path d="M631.5 237.0 l2.2 2.5 h-1.2 v4 h-2 v-4 h-1.2 z" fill="none" stroke="#228B22" stroke-width="1"/>
<path d="M567.7 266.0 l2.2 2.5 h-1.2 v4 h-2 v-4 h-1.2 z" fill="none" stroke="#228B22" stroke-width="1"/>
<text x="220.5" y="120.0" fill="#fff" stroke="#fff" stroke-width="0.25" font-size="9.3" text-anchor="start" textLength="76.0" lengthAdjust="spacingAndGlyphs" >EURUSD,Monthly</text>
<text x="304.0" y="120.0" fill="#fff" stroke="#fff" stroke-width="0.25" font-size="9.3" text-anchor="start" textLength="140.0" lengthAdjust="spacingAndGlyphs" >1.40313 1.41988 1.38319 1.40989</text>
<text x="222.2" y="170.6" fill="#fff" stroke="#fff" stroke-width="0.25" font-size="9.3" text-anchor="start" textLength="57.5" lengthAdjust="spacingAndGlyphs" >#2956314 sell</text>
<path d="M762.5 108 V514" stroke="#fff" shape-rendering="crispEdges"/>
<path d="M763 114.5 H766" stroke="#fff" shape-rendering="crispEdges"/>
<text x="768.0" y="117.3" fill="#fff" stroke="#fff" stroke-width="0.25" font-size="9.0" text-anchor="start" textLength="32.0" lengthAdjust="spacingAndGlyphs" >1.62730</text>
<path d="M763 146.5 H766" stroke="#fff" shape-rendering="crispEdges"/>
<text x="768.0" y="149.3" fill="#fff" stroke="#fff" stroke-width="0.25" font-size="9.0" text-anchor="start" textLength="32.0" lengthAdjust="spacingAndGlyphs" >1.50850</text>
<path d="M763 178.5 H766" stroke="#fff" shape-rendering="crispEdges"/>
<text x="768.0" y="181.3" fill="#fff" stroke="#fff" stroke-width="0.25" font-size="9.0" text-anchor="start" textLength="32.0" lengthAdjust="spacingAndGlyphs" >1.39330</text>
<path d="M763 210.5 H766" stroke="#fff" shape-rendering="crispEdges"/>
<text x="768.0" y="213.3" fill="#fff" stroke="#fff" stroke-width="0.25" font-size="9.0" text-anchor="start" textLength="32.0" lengthAdjust="spacingAndGlyphs" >1.27450</text>
<path d="M763 242.5 H766" stroke="#fff" shape-rendering="crispEdges"/>
<text x="768.0" y="245.3" fill="#fff" stroke="#fff" stroke-width="0.25" font-size="9.0" text-anchor="start" textLength="32.0" lengthAdjust="spacingAndGlyphs" >1.15930</text>
<path d="M763 274.5 H766" stroke="#fff" shape-rendering="crispEdges"/>
<text x="768.0" y="277.3" fill="#fff" stroke="#fff" stroke-width="0.25" font-size="9.0" text-anchor="start" textLength="32.0" lengthAdjust="spacingAndGlyphs" >1.04050</text>
<path d="M763 306.5 H766" stroke="#fff" shape-rendering="crispEdges"/>
<text x="768.0" y="309.3" fill="#fff" stroke="#fff" stroke-width="0.25" font-size="9.0" text-anchor="start" textLength="32.0" lengthAdjust="spacingAndGlyphs" >0.92530</text>
<path d="M763 338.5 H766" stroke="#fff" shape-rendering="crispEdges"/>
<text x="768.0" y="341.3" fill="#fff" stroke="#fff" stroke-width="0.25" font-size="9.0" text-anchor="start" textLength="32.0" lengthAdjust="spacingAndGlyphs" >0.81010</text>
<rect x="765" y="168" width="37" height="9" fill="#fff"/>
<text x="768.0" y="176.0" fill="#000" stroke="#000" stroke-width="0.25" font-size="9.0" text-anchor="start" textLength="32.0" lengthAdjust="spacingAndGlyphs" >1.40989</text>
<rect x="217" y="386.8" width="2" height="0.4" fill="#FF0000" shape-rendering="crispEdges"/>
<rect x="219" y="386.8" width="2" height="3.7" fill="#FF0000" shape-rendering="crispEdges"/>
<rect x="221" y="386.8" width="2" height="5.3" fill="#FF0000" shape-rendering="crispEdges"/>
<rect x="223" y="386.8" width="2" height="5.7" fill="#8B0000" shape-rendering="crispEdges"/>
<rect x="225" y="386.8" width="2" height="4.7" fill="#8B0000" shape-rendering="crispEdges"/>
<rect x="227" y="386.8" width="2" height="0.6" fill="#8B0000" shape-rendering="crispEdges"/>
<rect x="229" y="381.9" width="2" height="4.9" fill="#00FF00" shape-rendering="crispEdges"/>
<rect x="231" y="377.5" width="2" height="9.3" fill="#00FF00" shape-rendering="crispEdges"/>
<rect x="233" y="374.8" width="2" height="12.0" fill="#00FF00" shape-rendering="crispEdges"/>
<rect x="235" y="372.9" width="2" height="13.9" fill="#00FF00" shape-rendering="crispEdges"/>
<rect x="237" y="371.9" width="2" height="14.9" fill="#00FF00" shape-rendering="crispEdges"/>
<rect x="239" y="370.9" width="2" height="15.9" fill="#00FF00" shape-rendering="crispEdges"/>
<rect x="241" y="369.9" width="2" height="16.9" fill="#00FF00" shape-rendering="crispEdges"/>
<rect x="243" y="368.9" width="2" height="17.9" fill="#006400" shape-rendering="crispEdges"/>
<rect x="245" y="366.9" width="2" height="19.9" fill="#00FF00" shape-rendering="crispEdges"/>
<rect x="247" y="364.9" width="2" height="21.9" fill="#00FF00" shape-rendering="crispEdges"/>
<rect x="249" y="362.9" width="2" height="23.9" fill="#00FF00" shape-rendering="crispEdges"/>
<rect x="251" y="360.9" width="2" height="25.9" fill="#00FF00" shape-rendering="crispEdges"/>
<rect x="253" y="359.1" width="2" height="27.7" fill="#00FF00" shape-rendering="crispEdges"/>
<rect x="255" y="357.5" width="2" height="29.3" fill="#00FF00" shape-rendering="crispEdges"/>
<rect x="257" y="355.9" width="2" height="30.9" fill="#00FF00" shape-rendering="crispEdges"/>
<rect x="259" y="355.9" width="2" height="30.9" fill="#00FF00" shape-rendering="crispEdges"/>
<rect x="261" y="361.1" width="2" height="25.7" fill="#006400" shape-rendering="crispEdges"/>
<rect x="263" y="368.9" width="2" height="17.9" fill="#006400" shape-rendering="crispEdges"/>
<rect x="265" y="376.9" width="2" height="9.9" fill="#006400" shape-rendering="crispEdges"/>
<rect x="267" y="384.9" width="2" height="1.9" fill="#006400" shape-rendering="crispEdges"/>
<rect x="269" y="386.8" width="2" height="1.5" fill="#8B0000" shape-rendering="crispEdges"/>
<rect x="271" y="386.8" width="2" height="3.2" fill="#8B0000" shape-rendering="crispEdges"/>
<rect x="273" y="386.8" width="2" height="1.9" fill="#FF0000" shape-rendering="crispEdges"/>
<rect x="277" y="383.3" width="2" height="3.5" fill="#00FF00" shape-rendering="crispEdges"/>
<rect x="279" y="375.8" width="2" height="11.0" fill="#00FF00" shape-rendering="crispEdges"/>
<rect x="281" y="376.3" width="2" height="10.5" fill="#00FF00" shape-rendering="crispEdges"/>
<rect x="283" y="380.1" width="2" height="6.7" fill="#006400" shape-rendering="crispEdges"/>
<rect x="285" y="380.1" width="2" height="6.7" fill="#006400" shape-rendering="crispEdges"/>
<rect x="287" y="380.1" width="2" height="6.7" fill="#006400" shape-rendering="crispEdges"/>
<rect x="289" y="379.0" width="2" height="7.8" fill="#006400" shape-rendering="crispEdges"/>
<rect x="291" y="373.0" width="2" height="13.8" fill="#00FF00" shape-rendering="crispEdges"/>
<rect x="293" y="367.7" width="2" height="19.1" fill="#00FF00" shape-rendering="crispEdges"/>
<rect x="295" y="362.5" width="2" height="24.3" fill="#00FF00" shape-rendering="crispEdges"/>
<rect x="297" y="358.1" width="2" height="28.7" fill="#00FF00" shape-rendering="crispEdges"/>
<rect x="299" y="362.4" width="2" height="24.4" fill="#00FF00" shape-rendering="crispEdges"/>
<rect x="301" y="369.2" width="2" height="17.6" fill="#006400" shape-rendering="crispEdges"/>
<rect x="303" y="373.9" width="2" height="12.9" fill="#006400" shape-rendering="crispEdges"/>
<rect x="305" y="377.8" width="2" height="9.0" fill="#006400" shape-rendering="crispEdges"/>
<rect x="307" y="380.5" width="2" height="6.3" fill="#006400" shape-rendering="crispEdges"/>
<rect x="309" y="382.2" width="2" height="4.6" fill="#006400" shape-rendering="crispEdges"/>
<rect x="311" y="383.5" width="2" height="3.3" fill="#006400" shape-rendering="crispEdges"/>
<rect x="313" y="384.1" width="2" height="2.7" fill="#006400" shape-rendering="crispEdges"/>
<rect x="315" y="386.1" width="2" height="0.7" fill="#006400" shape-rendering="crispEdges"/>
<rect x="317" y="386.8" width="2" height="2.7" fill="#8B0000" shape-rendering="crispEdges"/>
<rect x="319" y="386.8" width="2" height="5.7" fill="#8B0000" shape-rendering="crispEdges"/>
<rect x="321" y="386.8" width="2" height="6.7" fill="#8B0000" shape-rendering="crispEdges"/>
<rect x="323" y="386.8" width="2" height="7.7" fill="#FF0000" shape-rendering="crispEdges"/>
<rect x="325" y="386.8" width="2" height="8.7" fill="#FF0000" shape-rendering="crispEdges"/>
<rect x="327" y="386.8" width="2" height="9.7" fill="#FF0000" shape-rendering="crispEdges"/>
<rect x="329" y="386.8" width="2" height="10.7" fill="#FF0000" shape-rendering="crispEdges"/>
<rect x="331" y="386.8" width="2" height="11.5" fill="#FF0000" shape-rendering="crispEdges"/>
<rect x="333" y="386.8" width="2" height="9.9" fill="#FF0000" shape-rendering="crispEdges"/>
<rect x="335" y="386.8" width="2" height="8.0" fill="#FF0000" shape-rendering="crispEdges"/>
<rect x="337" y="386.8" width="2" height="5.3" fill="#FF0000" shape-rendering="crispEdges"/>
<rect x="339" y="386.8" width="2" height="0.5" fill="#FF0000" shape-rendering="crispEdges"/>
<rect x="341" y="384.5" width="2" height="2.3" fill="#00FF00" shape-rendering="crispEdges"/>
<rect x="343" y="382.5" width="2" height="4.3" fill="#00FF00" shape-rendering="crispEdges"/>
<rect x="345" y="380.1" width="2" height="6.7" fill="#00FF00" shape-rendering="crispEdges"/>
<rect x="347" y="377.6" width="2" height="9.2" fill="#00FF00" shape-rendering="crispEdges"/>
<rect x="349" y="376.3" width="2" height="10.5" fill="#00FF00" shape-rendering="crispEdges"/>
<rect x="351" y="375.6" width="2" height="11.2" fill="#006400" shape-rendering="crispEdges"/>
<rect x="353" y="373.6" width="2" height="13.2" fill="#00FF00" shape-rendering="crispEdges"/>
<rect x="355" y="371.6" width="2" height="15.2" fill="#00FF00" shape-rendering="crispEdges"/>
<rect x="357" y="367.3" width="2" height="19.5" fill="#00FF00" shape-rendering="crispEdges"/>
<rect x="359" y="362.3" width="2" height="24.5" fill="#00FF00" shape-rendering="crispEdges"/>
<rect x="361" y="359.6" width="2" height="27.2" fill="#00FF00" shape-rendering="crispEdges"/>
<rect x="363" y="358.8" width="2" height="28.0" fill="#006400" shape-rendering="crispEdges"/>
<rect x="365" y="358.0" width="2" height="28.8" fill="#00FF00" shape-rendering="crispEdges"/>
<rect x="367" y="360.9" width="2" height="25.9" fill="#00FF00" shape-rendering="crispEdges"/>
<rect x="369" y="362.9" width="2" height="23.9" fill="#006400" shape-rendering="crispEdges"/>
<rect x="371" y="363.9" width="2" height="22.9" fill="#006400" shape-rendering="crispEdges"/>
<rect x="373" y="365.5" width="2" height="21.3" fill="#006400" shape-rendering="crispEdges"/>
<rect x="375" y="368.0" width="2" height="18.8" fill="#006400" shape-rendering="crispEdges"/>
<rect x="377" y="370.5" width="2" height="16.3" fill="#006400" shape-rendering="crispEdges"/>
<rect x="379" y="373.0" width="2" height="13.8" fill="#006400" shape-rendering="crispEdges"/>
<rect x="381" y="375.5" width="2" height="11.3" fill="#006400" shape-rendering="crispEdges"/>
<rect x="383" y="379.3" width="2" height="7.5" fill="#006400" shape-rendering="crispEdges"/>
<rect x="385" y="381.7" width="2" height="5.1" fill="#006400" shape-rendering="crispEdges"/>
<rect x="387" y="382.7" width="2" height="4.1" fill="#006400" shape-rendering="crispEdges"/>
<rect x="389" y="383.5" width="2" height="3.3" fill="#00FF00" shape-rendering="crispEdges"/>
<rect x="391" y="383.9" width="2" height="2.9" fill="#00FF00" shape-rendering="crispEdges"/>
<rect x="393" y="384.3" width="2" height="2.5" fill="#00FF00" shape-rendering="crispEdges"/>
<rect x="395" y="385.2" width="2" height="1.6" fill="#006400" shape-rendering="crispEdges"/>
<rect x="399" y="386.8" width="2" height="3.2" fill="#8B0000" shape-rendering="crispEdges"/>
<rect x="401" y="386.8" width="2" height="7.2" fill="#8B0000" shape-rendering="crispEdges"/>
<rect x="403" y="386.8" width="2" height="11.2" fill="#8B0000" shape-rendering="crispEdges"/>
<rect x="405" y="386.8" width="2" height="14.8" fill="#8B0000" shape-rendering="crispEdges"/>
<rect x="407" y="386.8" width="2" height="17.8" fill="#8B0000" shape-rendering="crispEdges"/>
<rect x="409" y="386.8" width="2" height="20.8" fill="#8B0000" shape-rendering="crispEdges"/>
<rect x="411" y="386.8" width="2" height="23.8" fill="#8B0000" shape-rendering="crispEdges"/>
<rect x="413" y="386.8" width="2" height="26.7" fill="#8B0000" shape-rendering="crispEdges"/>
<rect x="415" y="386.8" width="2" height="28.2" fill="#8B0000" shape-rendering="crispEdges"/>
<rect x="417" y="386.8" width="2" height="29.7" fill="#8B0000" shape-rendering="crispEdges"/>
<rect x="419" y="386.8" width="2" height="27.7" fill="#FF0000" shape-rendering="crispEdges"/>
<rect x="421" y="386.8" width="2" height="26.4" fill="#FF0000" shape-rendering="crispEdges"/>
<rect x="423" y="386.8" width="2" height="26.0" fill="#FF0000" shape-rendering="crispEdges"/>
<rect x="425" y="386.8" width="2" height="25.6" fill="#8B0000" shape-rendering="crispEdges"/>
<rect x="427" y="386.8" width="2" height="25.2" fill="#FF0000" shape-rendering="crispEdges"/>
<rect x="429" y="386.8" width="2" height="24.8" fill="#FF0000" shape-rendering="crispEdges"/>
<rect x="431" y="386.8" width="2" height="24.3" fill="#FF0000" shape-rendering="crispEdges"/>
<rect x="433" y="386.8" width="2" height="22.3" fill="#FF0000" shape-rendering="crispEdges"/>
<rect x="435" y="386.8" width="2" height="20.3" fill="#FF0000" shape-rendering="crispEdges"/>
<rect x="437" y="386.8" width="2" height="17.9" fill="#FF0000" shape-rendering="crispEdges"/>
<rect x="439" y="386.8" width="2" height="14.9" fill="#FF0000" shape-rendering="crispEdges"/>
<rect x="441" y="386.8" width="2" height="11.9" fill="#FF0000" shape-rendering="crispEdges"/>
<rect x="443" y="386.8" width="2" height="8.9" fill="#FF0000" shape-rendering="crispEdges"/>
<rect x="445" y="386.8" width="2" height="5.9" fill="#FF0000" shape-rendering="crispEdges"/>
<rect x="447" y="386.8" width="2" height="4.4" fill="#8B0000" shape-rendering="crispEdges"/>
<rect x="449" y="386.8" width="2" height="3.9" fill="#8B0000" shape-rendering="crispEdges"/>
<rect x="451" y="386.8" width="2" height="6.9" fill="#8B0000" shape-rendering="crispEdges"/>
<rect x="453" y="386.8" width="2" height="9.9" fill="#8B0000" shape-rendering="crispEdges"/>
<rect x="455" y="386.8" width="2" height="12.9" fill="#8B0000" shape-rendering="crispEdges"/>
<rect x="457" y="386.8" width="2" height="15.1" fill="#8B0000" shape-rendering="crispEdges"/>
<rect x="459" y="386.8" width="2" height="17.1" fill="#8B0000" shape-rendering="crispEdges"/>
<rect x="461" y="386.8" width="2" height="17.5" fill="#8B0000" shape-rendering="crispEdges"/>
<rect x="463" y="386.8" width="2" height="17.0" fill="#FF0000" shape-rendering="crispEdges"/>
<rect x="465" y="386.8" width="2" height="16.8" fill="#FF0000" shape-rendering="crispEdges"/>
<rect x="467" y="386.8" width="2" height="17.2" fill="#FF0000" shape-rendering="crispEdges"/>
<rect x="469" y="386.8" width="2" height="17.6" fill="#FF0000" shape-rendering="crispEdges"/>
<rect x="471" y="386.8" width="2" height="19.3" fill="#8B0000" shape-rendering="crispEdges"/>
<rect x="473" y="386.8" width="2" height="21.8" fill="#8B0000" shape-rendering="crispEdges"/>
<rect x="475" y="386.8" width="2" height="24.0" fill="#8B0000" shape-rendering="crispEdges"/>
<rect x="477" y="386.8" width="2" height="25.6" fill="#8B0000" shape-rendering="crispEdges"/>
<rect x="479" y="386.8" width="2" height="27.2" fill="#8B0000" shape-rendering="crispEdges"/>
<rect x="481" y="386.8" width="2" height="27.8" fill="#8B0000" shape-rendering="crispEdges"/>
<rect x="483" y="386.8" width="2" height="27.8" fill="#FF0000" shape-rendering="crispEdges"/>
<rect x="485" y="386.8" width="2" height="28.2" fill="#FF0000" shape-rendering="crispEdges"/>
<rect x="487" y="386.8" width="2" height="29.2" fill="#8B0000" shape-rendering="crispEdges"/>
<rect x="489" y="386.8" width="2" height="30.3" fill="#8B0000" shape-rendering="crispEdges"/>
<rect x="491" y="386.8" width="2" height="31.8" fill="#8B0000" shape-rendering="crispEdges"/>
<rect x="493" y="386.8" width="2" height="33.3" fill="#8B0000" shape-rendering="crispEdges"/>
<rect x="495" y="386.8" width="2" height="30.9" fill="#FF0000" shape-rendering="crispEdges"/>
<rect x="497" y="386.8" width="2" height="28.1" fill="#FF0000" shape-rendering="crispEdges"/>
<rect x="499" y="386.8" width="2" height="24.8" fill="#FF0000" shape-rendering="crispEdges"/>
<rect x="501" y="386.8" width="2" height="23.6" fill="#FF0000" shape-rendering="crispEdges"/>
<rect x="503" y="386.8" width="2" height="24.0" fill="#8B0000" shape-rendering="crispEdges"/>
<rect x="505" y="386.8" width="2" height="24.4" fill="#8B0000" shape-rendering="crispEdges"/>
<rect x="507" y="386.8" width="2" height="25.0" fill="#FF0000" shape-rendering="crispEdges"/>
<rect x="509" y="386.8" width="2" height="25.2" fill="#FF0000" shape-rendering="crispEdges"/>
<rect x="511" y="386.8" width="2" height="22.2" fill="#FF0000" shape-rendering="crispEdges"/>
<rect x="513" y="386.8" width="2" height="19.2" fill="#FF0000" shape-rendering="crispEdges"/>
<rect x="515" y="386.8" width="2" height="18.0" fill="#FF0000" shape-rendering="crispEdges"/>
<rect x="517" y="386.8" width="2" height="17.0" fill="#FF0000" shape-rendering="crispEdges"/>
<rect x="519" y="386.8" width="2" height="16.7" fill="#FF0000" shape-rendering="crispEdges"/>
<rect x="521" y="386.8" width="2" height="16.7" fill="#8B0000" shape-rendering="crispEdges"/>
<rect x="523" y="386.8" width="2" height="16.7" fill="#8B0000" shape-rendering="crispEdges"/>
<rect x="525" y="386.8" width="2" height="15.8" fill="#8B0000" shape-rendering="crispEdges"/>
<rect x="527" y="386.8" width="2" height="14.8" fill="#8B0000" shape-rendering="crispEdges"/>
<rect x="529" y="386.8" width="2" height="12.3" fill="#8B0000" shape-rendering="crispEdges"/>
<rect x="531" y="386.8" width="2" height="8.9" fill="#8B0000" shape-rendering="crispEdges"/>
<rect x="533" y="386.8" width="2" height="2.0" fill="#8B0000" shape-rendering="crispEdges"/>
<rect x="535" y="385.0" width="2" height="1.8" fill="#00FF00" shape-rendering="crispEdges"/>
<rect x="537" y="383.0" width="2" height="3.8" fill="#00FF00" shape-rendering="crispEdges"/>
<rect x="539" y="381.0" width="2" height="5.8" fill="#00FF00" shape-rendering="crispEdges"/>
<rect x="541" y="378.5" width="2" height="8.3" fill="#00FF00" shape-rendering="crispEdges"/>
<rect x="543" y="376.0" width="2" height="10.8" fill="#00FF00" shape-rendering="crispEdges"/>
<rect x="545" y="373.1" width="2" height="13.7" fill="#00FF00" shape-rendering="crispEdges"/>
<rect x="547" y="370.1" width="2" height="16.7" fill="#00FF00" shape-rendering="crispEdges"/>
<rect x="549" y="367.1" width="2" height="19.7" fill="#00FF00" shape-rendering="crispEdges"/>
<rect x="551" y="364.1" width="2" height="22.7" fill="#00FF00" shape-rendering="crispEdges"/>
<rect x="553" y="361.3" width="2" height="25.5" fill="#00FF00" shape-rendering="crispEdges"/>
<rect x="555" y="359.5" width="2" height="27.3" fill="#00FF00" shape-rendering="crispEdges"/>
<rect x="557" y="360.1" width="2" height="26.7" fill="#00FF00" shape-rendering="crispEdges"/>
<rect x="559" y="362.3" width="2" height="24.5" fill="#006400" shape-rendering="crispEdges"/>
<rect x="561" y="362.3" width="2" height="24.5" fill="#00FF00" shape-rendering="crispEdges"/>
<rect x="563" y="362.1" width="2" height="24.7" fill="#00FF00" shape-rendering="crispEdges"/>
<rect x="565" y="358.8" width="2" height="28.0" fill="#00FF00" shape-rendering="crispEdges"/>
<rect x="567" y="355.7" width="2" height="31.1" fill="#00FF00" shape-rendering="crispEdges"/>
<rect x="569" y="353.0" width="2" height="33.8" fill="#00FF00" shape-rendering="crispEdges"/>
<rect x="571" y="352.7" width="2" height="34.1" fill="#00FF00" shape-rendering="crispEdges"/>
<rect x="573" y="353.5" width="2" height="33.3" fill="#00FF00" shape-rendering="crispEdges"/>
<rect x="575" y="356.5" width="2" height="30.3" fill="#006400" shape-rendering="crispEdges"/>
<rect x="577" y="358.1" width="2" height="28.7" fill="#006400" shape-rendering="crispEdges"/>
<rect x="579" y="359.6" width="2" height="27.2" fill="#006400" shape-rendering="crispEdges"/>
<rect x="581" y="360.7" width="2" height="26.1" fill="#006400" shape-rendering="crispEdges"/>
<rect x="583" y="361.7" width="2" height="25.1" fill="#006400" shape-rendering="crispEdges"/>
<rect x="585" y="361.4" width="2" height="25.4" fill="#006400" shape-rendering="crispEdges"/>
<rect x="587" y="359.4" width="2" height="27.4" fill="#00FF00" shape-rendering="crispEdges"/>
<rect x="589" y="356.3" width="2" height="30.5" fill="#00FF00" shape-rendering="crispEdges"/>
<rect x="591" y="353.5" width="2" height="33.3" fill="#00FF00" shape-rendering="crispEdges"/>
<rect x="593" y="354.5" width="2" height="32.3" fill="#00FF00" shape-rendering="crispEdges"/>
<rect x="595" y="356.5" width="2" height="30.3" fill="#006400" shape-rendering="crispEdges"/>
<rect x="597" y="358.5" width="2" height="28.3" fill="#006400" shape-rendering="crispEdges"/>
<rect x="599" y="361.3" width="2" height="25.5" fill="#006400" shape-rendering="crispEdges"/>
<rect x="601" y="364.3" width="2" height="22.5" fill="#006400" shape-rendering="crispEdges"/>
<rect x="603" y="367.6" width="2" height="19.2" fill="#006400" shape-rendering="crispEdges"/>
<rect x="605" y="371.1" width="2" height="15.7" fill="#006400" shape-rendering="crispEdges"/>
<rect x="607" y="374.2" width="2" height="12.6" fill="#006400" shape-rendering="crispEdges"/>
<rect x="609" y="376.7" width="2" height="10.1" fill="#006400" shape-rendering="crispEdges"/>
<rect x="611" y="379.2" width="2" height="7.6" fill="#006400" shape-rendering="crispEdges"/>
<rect x="613" y="381.2" width="2" height="5.6" fill="#006400" shape-rendering="crispEdges"/>
<rect x="615" y="383.2" width="2" height="3.6" fill="#006400" shape-rendering="crispEdges"/>
<rect x="617" y="384.6" width="2" height="2.2" fill="#006400" shape-rendering="crispEdges"/>
<rect x="619" y="385.5" width="2" height="1.3" fill="#006400" shape-rendering="crispEdges"/>
<rect x="621" y="384.3" width="2" height="2.5" fill="#00FF00" shape-rendering="crispEdges"/>
<rect x="623" y="381.3" width="2" height="5.5" fill="#00FF00" shape-rendering="crispEdges"/>
<rect x="625" y="378.3" width="2" height="8.5" fill="#00FF00" shape-rendering="crispEdges"/>
<rect x="627" y="376.8" width="2" height="10.0" fill="#00FF00" shape-rendering="crispEdges"/>
<rect x="629" y="375.6" width="2" height="11.2" fill="#00FF00" shape-rendering="crispEdges"/>
<rect x="631" y="375.6" width="2" height="11.2" fill="#00FF00" shape-rendering="crispEdges"/>
<rect x="633" y="376.3" width="2" height="10.5" fill="#00FF00" shape-rendering="crispEdges"/>
<rect x="635" y="376.0" width="2" height="10.8" fill="#006400" shape-rendering="crispEdges"/>
<rect x="637" y="374.0" width="2" height="12.8" fill="#00FF00" shape-rendering="crispEdges"/>
<rect x="639" y="372.2" width="2" height="14.6" fill="#00FF00" shape-rendering="crispEdges"/>
<rect x="641" y="371.7" width="2" height="15.1" fill="#00FF00" shape-rendering="crispEdges"/>
<rect x="643" y="371.2" width="2" height="15.6" fill="#006400" shape-rendering="crispEdges"/>
<rect x="645" y="369.8" width="2" height="17.0" fill="#00FF00" shape-rendering="crispEdges"/>
<rect x="647" y="368.3" width="2" height="18.5" fill="#00FF00" shape-rendering="crispEdges"/>
<rect x="649" y="368.1" width="2" height="18.7" fill="#00FF00" shape-rendering="crispEdges"/>
<rect x="651" y="368.5" width="2" height="18.3" fill="#00FF00" shape-rendering="crispEdges"/>
<rect x="653" y="368.9" width="2" height="17.9" fill="#006400" shape-rendering="crispEdges"/>
<rect x="655" y="366.6" width="2" height="20.2" fill="#006400" shape-rendering="crispEdges"/>
<rect x="657" y="364.1" width="2" height="22.7" fill="#00FF00" shape-rendering="crispEdges"/>
<rect x="659" y="362.0" width="2" height="24.8" fill="#00FF00" shape-rendering="crispEdges"/>
<rect x="661" y="360.0" width="2" height="26.8" fill="#00FF00" shape-rendering="crispEdges"/>
<rect x="663" y="358.0" width="2" height="28.8" fill="#00FF00" shape-rendering="crispEdges"/>
<rect x="665" y="356.0" width="2" height="30.8" fill="#00FF00" shape-rendering="crispEdges"/>
<rect x="667" y="353.7" width="2" height="33.1" fill="#00FF00" shape-rendering="crispEdges"/>
<rect x="669" y="350.7" width="2" height="36.1" fill="#00FF00" shape-rendering="crispEdges"/>
<rect x="671" y="347.8" width="2" height="39.0" fill="#00FF00" shape-rendering="crispEdges"/>
<rect x="673" y="347.3" width="2" height="39.5" fill="#00FF00" shape-rendering="crispEdges"/>
<rect x="675" y="346.8" width="2" height="40.0" fill="#00FF00" shape-rendering="crispEdges"/>
<rect x="677" y="348.3" width="2" height="38.5" fill="#006400" shape-rendering="crispEdges"/>
<rect x="679" y="350.9" width="2" height="35.9" fill="#006400" shape-rendering="crispEdges"/>
<rect x="681" y="358.0" width="2" height="28.8" fill="#006400" shape-rendering="crispEdges"/>
<rect x="683" y="372.0" width="2" height="14.8" fill="#006400" shape-rendering="crispEdges"/>
<rect x="685" y="385.7" width="2" height="1.1" fill="#006400" shape-rendering="crispEdges"/>
<rect x="687" y="386.8" width="2" height="4.2" fill="#8B0000" shape-rendering="crispEdges"/>
<rect x="689" y="386.8" width="2" height="8.5" fill="#8B0000" shape-rendering="crispEdges"/>
<rect x="691" y="386.8" width="2" height="12.9" fill="#FF0000" shape-rendering="crispEdges"/>
<rect x="693" y="386.8" width="2" height="11.8" fill="#FF0000" shape-rendering="crispEdges"/>
<rect x="695" y="386.8" width="2" height="10.2" fill="#FF0000" shape-rendering="crispEdges"/>
<rect x="697" y="386.8" width="2" height="7.6" fill="#FF0000" shape-rendering="crispEdges"/>
<rect x="699" y="386.8" width="2" height="4.0" fill="#FF0000" shape-rendering="crispEdges"/>
<rect x="703" y="385.4" width="2" height="1.4" fill="#00FF00" shape-rendering="crispEdges"/>
<rect x="705" y="385.4" width="2" height="1.4" fill="#00FF00" shape-rendering="crispEdges"/>
<path d="M226.1 390.8 C226.9 389.9 228.9 387.6 230.6 385.7 C232.3 383.7 234.3 381.0 236.2 379.0 C238.0 376.9 239.7 375.3 241.7 373.4 C243.8 371.6 246.2 369.9 248.4 367.8 C250.6 365.8 253.1 363.0 255.1 361.2 C257.1 359.3 259.2 356.9 260.7 356.7 C262.2 356.5 262.9 358.0 264.0 360.0 C265.1 362.1 266.2 366.0 267.4 369.0 C268.5 371.9 269.6 375.5 270.7 377.9 C271.8 380.3 272.9 382.1 274.0 383.4 C275.1 384.7 276.3 385.9 277.4 385.7 C278.5 385.5 279.6 383.3 280.7 382.3 C281.8 381.3 282.4 380.2 284.1 379.7 C285.7 379.1 288.9 380.0 290.7 379.0 C292.6 377.9 293.7 375.5 295.2 373.4 C296.7 371.3 298.4 367.3 299.7 366.3 C301.0 365.2 301.7 366.0 303.0 367.2 C304.3 368.4 305.8 371.3 307.4 373.4 C309.1 375.6 311.3 378.1 313.0 380.1 C314.7 382.1 316.0 383.9 317.5 385.7 C319.0 387.4 320.4 389.5 321.9 390.8 C323.4 392.1 324.9 392.6 326.4 393.5 C327.9 394.4 329.4 395.7 330.8 396.1 C332.3 396.6 333.8 396.8 335.3 396.1 C336.8 395.5 338.3 393.7 339.7 392.4 C341.2 391.0 342.7 389.4 344.2 387.9 C345.7 386.4 347.2 384.9 348.7 383.4 C350.1 382.0 351.6 380.3 353.1 379.0 C354.6 377.7 356.1 377.5 357.6 375.6 C359.1 373.8 360.5 370.1 362.0 367.8 C363.5 365.5 365.0 362.8 366.5 361.8 C368.0 360.9 369.5 361.8 370.9 362.3 C372.4 362.7 373.9 363.5 375.4 364.5 C376.9 365.5 378.4 366.8 379.8 368.5 C381.3 370.2 383.4 373.2 384.3 374.5 C385.2 375.9 384.1 375.5 385.0 376.8 C385.9 378.1 387.8 381.2 389.5 382.3 C391.1 383.4 393.2 382.7 395.0 383.4 C396.9 384.2 398.9 384.7 400.6 386.8 C402.3 388.8 403.6 393.1 405.0 395.7 C406.5 398.3 408.0 400.1 409.5 402.4 C411.0 404.6 412.5 407.4 414.0 409.1 C415.4 410.7 416.6 411.8 418.4 412.4 C420.3 413.0 422.9 412.9 425.1 412.8 C427.3 412.8 429.6 412.8 431.8 412.0 C434.0 411.1 436.4 409.9 438.5 407.9 C440.5 406.0 442.4 402.4 444.0 400.1 C445.7 397.9 447.2 395.7 448.5 394.6 C449.8 393.5 450.5 393.1 451.8 393.5 C453.1 393.8 454.6 395.5 456.3 396.8 C458.0 398.1 460.0 400.1 461.9 401.3 C463.7 402.4 465.6 402.9 467.4 403.5 C469.3 404.0 471.3 403.9 473.0 404.6 C474.7 405.3 476.0 406.6 477.4 407.9 C478.9 409.2 480.2 411.3 481.9 412.4 C483.6 413.5 485.4 413.7 487.5 414.6 C489.5 415.6 492.3 418.0 494.2 418.0 C496.0 418.0 497.1 415.7 498.6 414.6 C500.1 413.5 501.4 411.8 503.1 411.3 C504.7 410.8 506.8 412.3 508.6 411.7 C510.5 411.2 512.5 409.1 514.2 407.9 C515.9 406.8 516.8 405.3 518.7 404.6 C520.5 403.9 523.5 404.0 525.3 403.5 C527.2 402.9 528.3 402.7 529.8 401.3 C531.3 399.8 532.8 396.8 534.3 394.6 C535.7 392.4 537.2 389.9 538.7 387.9 C540.2 385.9 541.7 384.2 543.2 382.3 C544.6 380.5 546.1 378.8 547.6 376.8 C549.1 374.7 550.8 371.9 552.1 370.1 C553.3 368.2 553.8 366.7 555.0 365.6 C556.2 364.5 557.8 364.1 559.5 363.4 C561.1 362.6 563.2 362.3 565.0 361.2 C566.9 360.0 568.9 357.7 570.6 356.7 C572.3 355.7 573.6 355.0 575.0 355.1 C576.5 355.3 577.6 356.2 579.5 357.4 C581.4 358.6 584.3 361.8 586.2 362.3 C588.0 362.7 589.0 361.1 590.6 360.0 C592.3 359.0 594.5 356.4 596.2 356.0 C597.9 355.7 599.2 356.4 600.7 357.8 C602.2 359.2 603.6 362.3 605.1 364.5 C606.6 366.7 608.1 369.1 609.6 371.2 C611.1 373.2 612.5 374.9 614.0 376.8 C615.5 378.6 617.2 381.0 618.5 382.3 C619.8 383.6 620.5 384.6 621.8 384.6 C623.1 384.6 624.6 383.3 626.3 382.3 C628.0 381.4 630.0 380.1 631.9 379.0 C633.7 377.9 635.4 376.6 637.4 375.6 C639.5 374.6 641.9 373.8 644.1 373.0 C646.3 372.2 648.6 371.5 650.8 370.7 C653.0 370.0 655.2 369.7 657.5 368.5 C659.7 367.3 662.1 365.2 664.2 363.4 C666.2 361.6 668.1 359.7 669.7 357.8 C671.4 356.0 672.7 353.7 674.2 352.3 C675.7 350.8 677.3 348.9 678.6 348.9 C679.9 348.9 680.9 350.0 682.0 352.3 C683.1 354.5 684.2 358.4 685.3 362.3 C686.4 366.2 687.5 371.7 688.7 375.6 C689.8 379.5 690.9 382.9 692.0 385.7 C693.1 388.5 694.3 390.9 695.3 392.4 C696.3 393.8 697.1 394.6 698.0 394.6 C698.9 394.6 700.1 393.1 700.9 392.4 C701.8 391.6 702.8 390.5 703.1 390.1" fill="none" stroke="#F0E020" stroke-width="1.1"/>
<text x="220.5" y="356.0" fill="#fff" stroke="#fff" stroke-width="0.25" font-size="9.3" text-anchor="start" textLength="64.0" lengthAdjust="spacingAndGlyphs" >MACD (5,35,5)</text>
<text x="291.0" y="356.0" fill="#fff" stroke="#fff" stroke-width="0.25" font-size="9.3" text-anchor="start" textLength="46.0" lengthAdjust="spacingAndGlyphs" >Sound_ON</text>
<text x="342.5" y="356.0" fill="#fff" stroke="#fff" stroke-width="0.25" font-size="9.3" text-anchor="start" textLength="47.0" lengthAdjust="spacingAndGlyphs" >Email_OFF</text>
<text x="397.0" y="356.0" fill="#fff" stroke="#fff" stroke-width="0.25" font-size="9.3" text-anchor="start" textLength="82.0" lengthAdjust="spacingAndGlyphs" >0.010665 -0.007333</text>
<path d="M763 350.5 H766" stroke="#fff" shape-rendering="crispEdges"/>
<path d="M763 387.5 H766" stroke="#fff" shape-rendering="crispEdges"/>
<path d="M763 418.5 H766" stroke="#fff" shape-rendering="crispEdges"/>
<text x="765.5" y="353.3" fill="#fff" stroke="#fff" stroke-width="0.25" font-size="9.0" text-anchor="start" textLength="37.5" lengthAdjust="spacingAndGlyphs" >0.185539</text>
<text x="766.0" y="389.8" fill="#fff" stroke="#fff" stroke-width="0.25" font-size="9.0" text-anchor="start" textLength="16.6" lengthAdjust="spacingAndGlyphs" >0.00</text>
<text x="765.5" y="421.3" fill="#fff" stroke="#fff" stroke-width="0.25" font-size="9.0" text-anchor="start" textLength="40.0" lengthAdjust="spacingAndGlyphs" >-0.152210</text>
<path d="M217 444.5 H762" stroke="#295555" stroke-dasharray="4 3" stroke-width="1" shape-rendering="crispEdges"/>
<path d="M217 470.5 H762" stroke="#295555" stroke-dasharray="4 3" stroke-width="1" shape-rendering="crispEdges"/>
<path d="M217 495.5 H762" stroke="#295555" stroke-dasharray="4 3" stroke-width="1" shape-rendering="crispEdges"/>
<path d="M252.0 490.2 L255.0 460.6 L258.0 435.2 L261.0 435.9 L264.0 444.2 L267.0 463.3 L270.0 485.6 L273.0 500.0 L276.0 500.7 L279.0 494.1 L282.0 483.0 L285.0 472.1 L288.0 467.9 L291.0 468.6 L294.0 465.1 L297.0 453.4 L300.0 441.6 L303.0 441.1 L306.0 455.3 L309.0 476.3 L312.0 491.5 L315.0 495.2 L318.0 495.9 L321.0 499.4 L324.0 502.9 L327.0 502.2 L330.0 501.2 L333.0 502.6 L336.0 500.3 L339.0 490.3 L342.0 475.5 L345.0 461.5 L348.0 451.5 L351.0 446.0 L354.0 444.7 L357.0 444.9 L360.0 442.9 L363.0 439.2 L366.0 438.6 L369.0 441.6 L372.0 447.1 L375.0 454.1 L378.0 460.0 L381.0 465.5 L384.0 473.4 L387.0 484.5 L390.0 495.5 L393.0 498.8 L396.0 495.5 L399.0 492.8 L402.0 496.7 L405.0 501.3 L408.0 503.7 L411.0 505.1 L414.0 506.7 L417.0 507.5 L420.0 505.5 L423.0 499.0 L426.0 493.6 L429.0 492.9 L432.0 495.7 L435.0 493.2 L438.0 484.3 L441.0 472.0 L444.0 458.9 L447.0 449.7 L450.0 449.7 L453.0 459.9 L456.0 475.6 L459.0 491.8 L462.0 503.6 L465.0 505.3 L468.0 500.3 L471.0 496.8 L474.0 499.6 L477.0 505.1 L480.0 507.5 L483.0 506.3 L486.0 502.4 L489.0 497.7 L492.0 496.6 L495.0 499.8 L498.0 498.9 L501.0 490.1 L504.0 479.7 L507.0 477.3 L510.0 482.6 L513.0 486.9 L516.0 482.3 L519.0 472.2 L522.0 468.0 L525.0 473.7 L528.0 482.1 L531.0 480.4 L534.0 465.0 L537.0 448.7 L540.0 443.2 L543.0 444.1 L546.0 441.8 L549.0 437.4 L552.0 433.7 L555.0 432.5 L558.0 433.4 L561.0 437.7 L564.0 444.0 L567.0 445.5 L570.0 440.7 L573.0 436.1 L576.0 437.1 L579.0 443.1 L582.0 450.2 L585.0 455.7 L588.0 457.3 L591.0 452.4 L594.0 443.1 L597.0 437.4 L600.0 440.7 L603.0 451.4 L606.0 466.2 L609.0 482.2 L612.0 494.3 L615.0 500.6 L618.0 503.5 L621.0 503.2 L624.0 499.2 L627.0 490.6 L630.0 474.5 L633.0 456.1 L636.0 444.0 L639.0 440.4 L642.0 439.1 L645.0 438.3 L648.0 436.9 L651.0 435.5 L654.0 434.9 L657.0 435.2 L660.0 435.2 L663.0 435.4 L666.0 436.2 L669.0 435.9 L672.0 434.1 L675.0 434.5 L678.0 436.6 L681.0 439.7 L684.0 447.7 L687.0 467.5 L690.0 486.8 L693.0 495.7 L696.0 495.8 L699.0 495.8 L702.0 490.2 L705.0 480.7" fill="none" stroke="#8A8A8A" stroke-width="0.7" stroke-dasharray="2 2"/>
<path d="M253.5 428 V512" stroke="#8A8A8A" stroke-width="0.7" stroke-dasharray="3 2"/>
<path d="M216.8 512.2 L248.9 512.2" fill="none" stroke="#FF0000" stroke-width="2.8" stroke-linejoin="round" stroke-linecap="round"/>
<path d="M249.3 512.2 L249.8 493.1 L250.6 450.7 L251.8 434.0 L255.1 432.9 L258.4 435.1 L260.7 440.7" fill="none" stroke="#228B22" stroke-width="2.8" stroke-linejoin="round" stroke-linecap="round"/>
<path d="M260.7 440.7 L262.9 453.0 L265.1 475.2 L265.8 486.4" fill="none" stroke="#7B8CA3" stroke-width="2" stroke-linejoin="round" stroke-linecap="round"/>
<path d="M265.8 486.4 L267.4 499.7 L269.6 504.2 L274.0 500.9" fill="none" stroke="#FF0000" stroke-width="2.8" stroke-linejoin="round" stroke-linecap="round"/>
<path d="M274.0 500.9 L277.4 488.6 L280.7 473.0 L282.9 464.1 L285.2 465.2 L287.4 471.9 L290.7 469.7 L293.0 457.4 L293.4 453.0" fill="none" stroke="#7B8CA3" stroke-width="2" stroke-linejoin="round" stroke-linecap="round"/>
<path d="M293.4 453.0 L295.2 441.8 L298.5 432.9 L301.4 442.9" fill="none" stroke="#228B22" stroke-width="2.8" stroke-linejoin="round" stroke-linecap="round"/>
<path d="M301.4 442.9 L303.7 461.9 L305.2 477.5 L306.8 490.4" fill="none" stroke="#7B8CA3" stroke-width="2" stroke-linejoin="round" stroke-linecap="round"/>
<path d="M306.8 490.4 L309.7 498.6 L315.2 491.9 L317.5 499.7 L320.8 507.5 L325.3 497.5 L330.8 506.0 L333.5 502.0" fill="none" stroke="#FF0000" stroke-width="2.8" stroke-linejoin="round" stroke-linecap="round"/>
<path d="M333.5 502.0 L336.4 486.4 L339.7 468.6 L343.1 453.0 L346.4 446.3" fill="none" stroke="#7B8CA3" stroke-width="2" stroke-linejoin="round" stroke-linecap="round"/>
<path d="M346.4 446.3 L349.8 442.9 L352.0 444.0 L354.9 448.5 L357.6 440.7 L360.9 435.1 L364.3 440.7 L367.6 442.9" fill="none" stroke="#228B22" stroke-width="2.8" stroke-linejoin="round" stroke-linecap="round"/>
<path d="M367.6 442.9 L370.9 453.0 L373.2 460.8 L376.5 460.8 L379.8 470.8 L383.2 481.9 L385.4 493.1" fill="none" stroke="#7B8CA3" stroke-width="2" stroke-linejoin="round" stroke-linecap="round"/>
<path d="M385.4 493.1 L387.6 500.9 L389.9 506.4" fill="none" stroke="#FF0000" stroke-width="2.8" stroke-linejoin="round" stroke-linecap="round"/>
<path d="M389.9 506.4 L387.2 502.0 L389.9 506.9" fill="none" stroke="#FF0000" stroke-width="2.8" stroke-linejoin="round" stroke-linecap="round"/>
<path d="M389.9 506.9 L389.9 506.9" fill="none" stroke="#FF0000" stroke-width="2.8" stroke-linejoin="round" stroke-linecap="round"/>
<path d="M389.9 506.9 L392.1 493.1 L394.4 487.5 L396.6 493.1" fill="none" stroke="#7B8CA3" stroke-width="2" stroke-linejoin="round" stroke-linecap="round"/>
<path d="M396.6 493.1 L399.5 499.7 L403.9 504.2 L409.5 505.3 L414.0 509.8 L417.3 505.3 L419.5 500.9" fill="none" stroke="#FF0000" stroke-width="2.8" stroke-linejoin="round" stroke-linecap="round"/>
<path d="M419.5 500.9 L421.8 490.8 L424.0 488.6 L426.2 494.2" fill="none" stroke="#7B8CA3" stroke-width="2" stroke-linejoin="round" stroke-linecap="round"/>
<path d="M426.2 494.2 L429.6 498.6 L431.8 496.4" fill="none" stroke="#FF0000" stroke-width="2.8" stroke-linejoin="round" stroke-linecap="round"/>
<path d="M431.8 496.4 L435.1 481.9 L438.5 467.4 L440.7 459.6" fill="none" stroke="#7B8CA3" stroke-width="2" stroke-linejoin="round" stroke-linecap="round"/>
<path d="M440.7 459.6 L442.5 448.5 L444.7 441.8 L446.3 445.2" fill="none" stroke="#228B22" stroke-width="2.8" stroke-linejoin="round" stroke-linecap="round"/>
<path d="M446.3 445.2 L449.6 459.6 L452.9 476.4 L455.2 491.9" fill="none" stroke="#7B8CA3" stroke-width="2" stroke-linejoin="round" stroke-linecap="round"/>
<path d="M455.2 491.9 L457.4 504.2 L460.3 510.4 L463.0 505.3 L465.2 496.4" fill="none" stroke="#FF0000" stroke-width="2.8" stroke-linejoin="round" stroke-linecap="round"/>
<path d="M465.2 496.4 L467.4 493.1 L469.2 495.3" fill="none" stroke="#7B8CA3" stroke-width="2" stroke-linejoin="round" stroke-linecap="round"/>
<path d="M469.2 495.3 L471.9 503.1 L475.2 509.8 L479.7 506.4 L484.1 502.0" fill="none" stroke="#FF0000" stroke-width="2.8" stroke-linejoin="round" stroke-linecap="round"/>
<path d="M484.1 502.0 L486.4 491.9" fill="none" stroke="#7B8CA3" stroke-width="2" stroke-linejoin="round" stroke-linecap="round"/>
<path d="M486.4 489.7 L489.7 497.5 L493.0 504.2 L495.7 500.9" fill="none" stroke="#FF0000" stroke-width="2.8" stroke-linejoin="round" stroke-linecap="round"/>
<path d="M495.7 500.9 L498.6 484.1 L502.0 470.8 L505.3 479.7 L508.6 488.6 L511.5 491.9 L514.2 475.2 L517.5 460.8 L520.9 470.8 L524.2 484.1 L527.6 489.7 L529.8 475.2 L530.9 459.6" fill="none" stroke="#7B8CA3" stroke-width="2" stroke-linejoin="round" stroke-linecap="round"/>
<path d="M530.9 459.6 L532.5 444.0 L534.7 439.6 L538.7 446.3 L542.1 444.0 L545.4 436.3 L549.8 431.8 L554.3 432.9" fill="none" stroke="#228B22" stroke-width="2.8" stroke-linejoin="round" stroke-linecap="round"/>
<path d="M553.9 432.9 L555.0 431.8 L558.3 437.4 L559.9 442.9" fill="none" stroke="#228B22" stroke-width="2.8" stroke-linejoin="round" stroke-linecap="round"/>
<path d="M559.9 442.9 L561.2 449.6 L563.9 449.6 L564.4 446.3" fill="none" stroke="#7B8CA3" stroke-width="2" stroke-linejoin="round" stroke-linecap="round"/>
<path d="M564.4 446.3 L567.3 437.4 L570.1 432.5 L573.9 438.5 L576.2 444.0" fill="none" stroke="#228B22" stroke-width="2.8" stroke-linejoin="round" stroke-linecap="round"/>
<path d="M576.2 444.0 L579.5 454.1 L582.8 458.5 L586.2 458.5 L588.4 453.0 L589.5 446.3" fill="none" stroke="#7B8CA3" stroke-width="2" stroke-linejoin="round" stroke-linecap="round"/>
<path d="M589.5 446.3 L591.8 436.3 L594.0 431.8 L596.2 438.5 L597.8 444.0" fill="none" stroke="#228B22" stroke-width="2.8" stroke-linejoin="round" stroke-linecap="round"/>
<path d="M597.8 444.0 L600.7 455.2 L602.9 466.3 L605.1 481.9 L607.4 495.3" fill="none" stroke="#7B8CA3" stroke-width="2" stroke-linejoin="round" stroke-linecap="round"/>
<path d="M607.4 495.3 L611.8 500.9 L616.3 506.9 L619.6 500.9 L621.8 497.5" fill="none" stroke="#FF0000" stroke-width="2.8" stroke-linejoin="round" stroke-linecap="round"/>
<path d="M621.8 497.5 L625.2 488.6 L627.4 468.6 L629.2 453.0" fill="none" stroke="#7B8CA3" stroke-width="2" stroke-linejoin="round" stroke-linecap="round"/>
<path d="M629.2 453.0 L631.9 441.8 L635.2 439.6 L638.5 440.7 L641.9 436.3 L645.2 438.5 L649.7 432.5 L654.1 437.4 L658.6 432.9 L663.0 438.5 L667.5 434.0 L671.3 432.5 L675.3 438.5 L679.7 440.0" fill="none" stroke="#228B22" stroke-width="2.8" stroke-linejoin="round" stroke-linecap="round"/>
<path d="M679.7 440.0 L682.0 448.5 L683.8 466.3 L685.3 488.6" fill="none" stroke="#7B8CA3" stroke-width="2" stroke-linejoin="round" stroke-linecap="round"/>
<path d="M685.3 488.6 L686.4 497.5 L687.5 500.9 L688.7 495.3" fill="none" stroke="#FF0000" stroke-width="2.8" stroke-linejoin="round" stroke-linecap="round"/>
<path d="M688.7 495.3 L692.0 494.2" fill="none" stroke="#7B8CA3" stroke-width="2" stroke-linejoin="round" stroke-linecap="round"/>
<path d="M692.0 494.2 L695.8 498.6 L698.0 496.4" fill="none" stroke="#FF0000" stroke-width="2.8" stroke-linejoin="round" stroke-linecap="round"/>
<path d="M698.0 496.4 L699.8 485.3 L702.0 476.4 L703.6 471.9" fill="none" stroke="#7B8CA3" stroke-width="2" stroke-linejoin="round" stroke-linecap="round"/>
<text x="220.5" y="440.0" fill="#fff" stroke="#fff" stroke-width="0.25" font-size="9.3" text-anchor="start" textLength="270.0" lengthAdjust="spacingAndGlyphs" >Stochastic (MN1,14,3,3,SMMA,Low/High,80,20) 36.1833 47.4879</text>
<text x="766.0" y="436.3" fill="#fff" stroke="#fff" stroke-width="0.25" font-size="9.0" text-anchor="start" textLength="14.0" lengthAdjust="spacingAndGlyphs" >100</text>
<text x="766.0" y="446.8" fill="#fff" stroke="#fff" stroke-width="0.25" font-size="9.0" text-anchor="start" textLength="9.3" lengthAdjust="spacingAndGlyphs" >80</text>
<text x="766.0" y="473.3" fill="#fff" stroke="#fff" stroke-width="0.25" font-size="9.0" text-anchor="start" textLength="9.3" lengthAdjust="spacingAndGlyphs" >50</text>
<text x="766.0" y="497.8" fill="#fff" stroke="#fff" stroke-width="0.25" font-size="9.0" text-anchor="start" textLength="9.3" lengthAdjust="spacingAndGlyphs" >20</text>
<text x="766.0" y="509.8" fill="#fff" stroke="#fff" stroke-width="0.25" font-size="9.0" text-anchor="start" textLength="4.6" lengthAdjust="spacingAndGlyphs" >0</text>
<path d="M763 444.5 H766" stroke="#fff" shape-rendering="crispEdges"/>
<path d="M763 470.5 H766" stroke="#fff" shape-rendering="crispEdges"/>
<path d="M763 495.5 H766" stroke="#fff" shape-rendering="crispEdges"/>
<path d="M217.5 514 V517" stroke="#fff" shape-rendering="crispEdges"/>
<text x="217.5" y="526.0" fill="#fff" stroke="#fff" stroke-width="0.25" font-size="9.2" text-anchor="start" textLength="44.0" lengthAdjust="spacingAndGlyphs" >1 Apr 1989</text>
<path d="M281.5 514 V517" stroke="#fff" shape-rendering="crispEdges"/>
<text x="281.5" y="526.0" fill="#fff" stroke="#fff" stroke-width="0.25" font-size="9.2" text-anchor="start" textLength="44.0" lengthAdjust="spacingAndGlyphs" >1 Dec 1991</text>
<path d="M345.5 514 V517" stroke="#fff" shape-rendering="crispEdges"/>
<text x="345.5" y="526.0" fill="#fff" stroke="#fff" stroke-width="0.25" font-size="9.2" text-anchor="start" textLength="44.0" lengthAdjust="spacingAndGlyphs" >1 Aug 1994</text>
<path d="M409.5 514 V517" stroke="#fff" shape-rendering="crispEdges"/>
<text x="409.5" y="526.0" fill="#fff" stroke="#fff" stroke-width="0.25" font-size="9.2" text-anchor="start" textLength="44.0" lengthAdjust="spacingAndGlyphs" >1 Apr 1997</text>
<path d="M473.5 514 V517" stroke="#fff" shape-rendering="crispEdges"/>
<text x="473.5" y="526.0" fill="#fff" stroke="#fff" stroke-width="0.25" font-size="9.2" text-anchor="start" textLength="44.0" lengthAdjust="spacingAndGlyphs" >1 Dec 1999</text>
<path d="M537.5 514 V517" stroke="#fff" shape-rendering="crispEdges"/>
<text x="537.5" y="526.0" fill="#fff" stroke="#fff" stroke-width="0.25" font-size="9.2" text-anchor="start" textLength="44.0" lengthAdjust="spacingAndGlyphs" >1 Aug 2002</text>
<path d="M601.5 514 V517" stroke="#fff" shape-rendering="crispEdges"/>
<text x="601.5" y="526.0" fill="#fff" stroke="#fff" stroke-width="0.25" font-size="9.2" text-anchor="start" textLength="44.0" lengthAdjust="spacingAndGlyphs" >1 Apr 2005</text>
<path d="M665.5 514 V517" stroke="#fff" shape-rendering="crispEdges"/>
<text x="665.5" y="526.0" fill="#fff" stroke="#fff" stroke-width="0.25" font-size="9.2" text-anchor="start" textLength="44.0" lengthAdjust="spacingAndGlyphs" >1 Dec 2007</text>
</svg>
<div class="a" style="left:212px;top:531px;width:592px;height:2px;background:#fff"></div>
<div class="a" style="left:226.8px;top:535.0px;font-family:'Liberation Sans',sans-serif;font-size:11.3px;line-height:15px;color:#8C8C8C;transform-origin:0 0;transform:scaleX(0.872);">USDX,Daily</div>
<div class="a" style="left:407.4px;top:535.0px;font-family:'Liberation Sans',sans-serif;font-size:11.3px;line-height:15px;color:#8C8C8C;transform-origin:0 0;transform:scaleX(0.842);">GBPUSD,H1</div>
<div class="a" style="left:486.6px;top:535.0px;font-family:'Liberation Sans',sans-serif;font-size:11.3px;line-height:15px;color:#8C8C8C;transform-origin:0 0;transform:scaleX(0.868);">USDJPY,H1</div>
<div class="a" style="left:562.8px;top:535.0px;font-family:'Liberation Sans',sans-serif;font-size:11.3px;line-height:15px;color:#8C8C8C;transform-origin:0 0;transform:scaleX(0.865);">AUDUSD,H1</div>
<div class="a" style="left:641.9px;top:535.0px;font-family:'Liberation Sans',sans-serif;font-size:11.3px;line-height:15px;color:#8C8C8C;transform-origin:0 0;transform:scaleX(0.871);">USDCAD,M5</div>
<div class="a" style="left:722.9px;top:535px;width:47.2px;height:15px;overflow:hidden"><div class="a" style="left:0.0px;top:0.0px;font-family:'Liberation Sans',sans-serif;font-size:11.3px;line-height:15px;color:#8C8C8C;transform-origin:0 0;transform:scaleX(0.881);">NZDUSD,H1</div></div>
<div class="a" style="left:476px;top:536px;width:1px;height:13px;background:#8A8A8A"></div>
<div class="a" style="left:552px;top:536px;width:1px;height:13px;background:#8A8A8A"></div>
<div class="a" style="left:632px;top:536px;width:1px;height:13px;background:#8A8A8A"></div>
<div class="a" style="left:712px;top:536px;width:1px;height:13px;background:#8A8A8A"></div>
<div class="a" style="left:292px;top:531px;width:104px;height:21px;background:#fff;border:1px solid #000;border-top:none;border-right-width:2px;box-sizing:border-box"></div>
<div class="a" style="left:302.8px;top:535.0px;font-family:'Liberation Sans',sans-serif;font-size:11.3px;line-height:15px;color:#000;transform-origin:0 0;transform:scaleX(0.896);">EURUSD,Monthly</div>
<div class="a" style="left:212px;top:533px;width:1px;height:19px;background:#fff"></div>
<svg class="a" style="left:772px;top:537px" width="28" height="12" viewBox="0 0 28 12"><path d="M7.5 2.5 L4 6 L7.5 9.5 Z" fill="#9A9A9A"/><path d="M20.5 2 L24.5 6 L20.5 10 Z" fill="#000"/></svg>
<div class="a hl" style="top:552px;background:#fff;height:2px"></div>
<div class="a" style="left:170.5px;top:558.5px;font-family:'Liberation Mono',monospace;font-size:10.3px;line-height:13px;color:#000;transform-origin:0 0;transform:scaleX(0.971);">00:00</div>
<div class="a" style="left:217.4px;top:558.5px;font-family:'Liberation Mono',monospace;font-size:10.3px;line-height:13px;color:#000;transform-origin:0 0;transform:scaleX(0.971);">O: 0.94210</div>
<div class="a" style="left:304.0px;top:558.5px;font-family:'Liberation Mono',monospace;font-size:10.3px;line-height:13px;color:#000;transform-origin:0 0;transform:scaleX(0.971);">H: 0.95990</div>
<div class="a" style="left:389.0px;top:558.5px;font-family:'Liberation Mono',monospace;font-size:10.3px;line-height:13px;color:#000;transform-origin:0 0;transform:scaleX(0.971);">L: 0.91130</div>
<div class="a" style="left:475.4px;top:558.5px;font-family:'Liberation Mono',monospace;font-size:10.3px;line-height:13px;color:#000;transform-origin:0 0;transform:scaleX(0.971);">C: 0.93790</div>
<div class="a" style="left:562.0px;top:558.5px;font-family:'Liberation Mono',monospace;font-size:10.3px;line-height:13px;color:#000;transform-origin:0 0;transform:scaleX(0.971);">V: 4931</div>
<div class="a" style="left:702.6px;top:558.5px;font-family:'Liberation Mono',monospace;font-size:10.3px;line-height:13px;color:#000;transform-origin:0 0;transform:scaleX(0.944);-webkit-text-stroke:0.3px #000;">7/0 kb</div>
<div class="a vs" style="left:212px"></div>
<div class="a vs" style="left:298px"></div>
<div class="a vs" style="left:384px"></div>
<div class="a vs" style="left:470px"></div>
<div class="a vs" style="left:556px"></div>
<div class="a vs" style="left:642px"></div>
<svg class="a" style="left:647px;top:558px" width="26" height="14" viewBox="0 0 26 14" shape-rendering="crispEdges"><rect x="1" y="1" width="2" height="8.6" fill="#4A7A00"/><rect x="1" y="10.6" width="2" height="2.4" fill="#8B0A00"/><rect x="4" y="1" width="2" height="7.8" fill="#4A7A00"/><rect x="4" y="9.8" width="2" height="3.2" fill="#8B0A00"/><rect x="7" y="1" width="2" height="6.7" fill="#4A7A00"/><rect x="7" y="8.7" width="2" height="4.3" fill="#8B0A00"/><rect x="10" y="1" width="2" height="5.6" fill="#4A7A00"/><rect x="10" y="7.6" width="2" height="5.4" fill="#8B0A00"/><rect x="13" y="1" width="2" height="4.5" fill="#4A7A00"/><rect x="13" y="6.5" width="2" height="6.5" fill="#8B0A00"/><rect x="16" y="1" width="2" height="3.4" fill="#4A7A00"/><rect x="16" y="5.4" width="2" height="7.6" fill="#8B0A00"/><rect x="19" y="1" width="2" height="2.3" fill="#4A7A00"/><rect x="19" y="4.3" width="2" height="8.7" fill="#8B0A00"/><rect x="22" y="1" width="2" height="1.8" fill="#4A7A00"/><rect x="22" y="3.8" width="2" height="9.2" fill="#8B0A00"/></svg>
<svg class="a" style="left:788px;top:558px" width="16" height="16" viewBox="0 0 16 16"><path d="M15 3 L3 15 M15 7 L7 15 M15 11 L11 15" stroke="#B8B6BC" stroke-width="1.6"/><path d="M16 4 L4 16 M16 8 L8 16 M16 12 L12 16" stroke="#fff" stroke-width="1"/></svg>
</body></html>
